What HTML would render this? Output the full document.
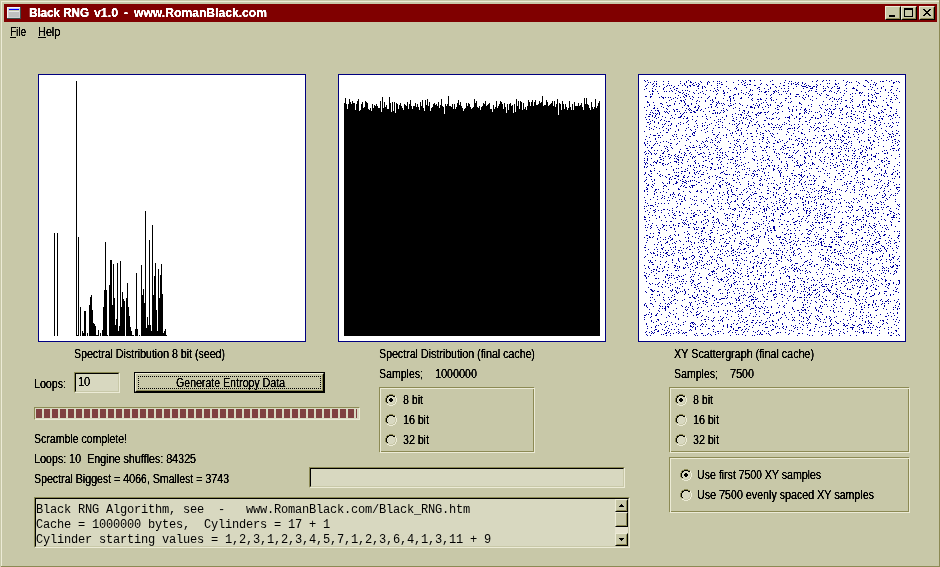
<!DOCTYPE html>
<html><head><meta charset="utf-8"><title>Black RNG</title>
<style>
html,body{margin:0;padding:0}
body{width:940px;height:567px;overflow:hidden;background:#c8c8a8;position:relative;font-family:"Liberation Sans",sans-serif;font-size:12px;color:#000}
.abs{position:absolute}
.t{position:absolute;white-space:nowrap;line-height:14px;height:14px;transform-origin:0 0;display:inline-block;will-change:transform;filter:url(#al)}
u{text-decoration:none;border-bottom:1px solid #000;display:inline-block;line-height:11px;height:12px}
.panel{position:absolute;width:268px;height:268px;box-sizing:border-box;border:1px solid #000080;background:#fff}
.sunk{position:absolute;box-sizing:border-box;border:1px solid;border-color:#8c8a54 #ecebd6 #ecebd6 #8c8a54;background:#d8d8c0}
.sunk>i{position:absolute;left:0;top:0;right:0;bottom:0;border:1px solid;border-color:#000 #c8c8a8 #c8c8a8 #000}
.mono{will-change:transform;position:absolute;font-family:"Liberation Mono",monospace;font-size:12px;letter-spacing:-0.2px;line-height:15px;white-space:pre}
</style></head><body>
<svg width="0" height="0" style="position:absolute"><filter id="al" x="0" y="0" width="100%" height="100%" color-interpolation-filters="sRGB"><feComponentTransfer><feFuncA type="table" tableValues="0 0.05 0.75 1 1 1"/></feComponentTransfer></filter></svg>
<!-- frame -->
<div class="abs" style="left:1px;top:1px;width:938px;height:1px;background:#ecebd6"></div>
<div class="abs" style="left:1px;top:1px;width:1px;height:565px;background:#ecebd6"></div>
<div class="abs" style="left:939px;top:0;width:1px;height:567px;background:#8c8a54"></div>
<div class="abs" style="left:1px;top:566px;width:939px;height:1px;background:#8c8a54"></div>
<!-- title bar -->
<div class="abs" style="left:4px;top:4px;width:933px;height:18px;background:#800000"></div>
<svg class="abs" style="left:7px;top:7px" width="14" height="12" viewBox="0 0 14 12" shape-rendering="crispEdges">
<rect x="0" y="0" width="14" height="12" fill="#3c5050"/>
<rect x="0" y="0" width="13" height="11" fill="#f4f4f8"/>
<rect x="1" y="1" width="12" height="10" fill="#d0d0d0"/>
<rect x="2" y="1" width="10" height="1" fill="#c4c4f6"/>
<rect x="2" y="2" width="10" height="1" fill="#0000ff"/>
<rect x="2" y="3" width="10" height="1" fill="#c4c4a4"/>
<rect x="2" y="4" width="10" height="1" fill="#e8e8e8"/>
<rect x="2" y="5" width="10" height="5" fill="#c0c0c0"/>
</svg>

<div class="abs" style="left:885px;top:6px;width:16px;height:14px;background:#c8c8a8;box-sizing:border-box;border:1px solid;border-color:#ecebd6 #000 #000 #ecebd6"><div style="width:14px;height:12px;box-sizing:border-box;border:1px solid;border-color:#c8c8a8 #8c8a54 #8c8a54 #c8c8a8;position:relative"><div class="abs" style="left:2px;top:7px;width:6px;height:2px;background:#000"></div></div></div>
<div class="abs" style="left:901px;top:6px;width:16px;height:14px;background:#c8c8a8;box-sizing:border-box;border:1px solid;border-color:#ecebd6 #000 #000 #ecebd6"><div style="width:14px;height:12px;box-sizing:border-box;border:1px solid;border-color:#c8c8a8 #8c8a54 #8c8a54 #c8c8a8;position:relative"><div class="abs" style="left:1px;top:0px;width:9px;height:9px;box-sizing:border-box;border:1px solid #000;border-top-width:2px"></div></div></div>
<div class="abs" style="left:919px;top:6px;width:16px;height:14px;background:#c8c8a8;box-sizing:border-box;border:1px solid;border-color:#ecebd6 #000 #000 #ecebd6"><div style="width:14px;height:12px;box-sizing:border-box;border:1px solid;border-color:#c8c8a8 #8c8a54 #8c8a54 #c8c8a8;position:relative"><svg class="abs" style="left:2px;top:1px" width="8" height="7" viewBox="0 0 8 7" shape-rendering="crispEdges"><path d="M0 0h2v1h1v1h2v-1h1v-1h2v1h-1v1h-1v1h-1v1h1v1h1v1h1v1h-2v-1h-1v-1h-2v1h-1v1h-2v-1h1v-1h1v-1h1v-1h-1v-1h-1v-1h-1z" fill="#000"/></svg></div></div>
<div class="abs" style="left:10px;top:37px;width:6px;height:1px;background:#000"></div><div class="abs" style="left:38px;top:37px;width:8px;height:1px;background:#000"></div>
<!-- panels -->
<div class="panel" style="left:38px;top:74px"><svg class="abs" style="left:-1px;top:-1px" width="268" height="268" viewBox="0 0 268 268" shape-rendering="crispEdges"><path d="M16 159v103h1v-103zM19 159v103h1v-103zM38 7v255h1v-255zM39 261v1h1v-1zM40 163v99h1v-99zM42 233v29h1v-29zM44 257v5h1v-5zM45 259v3h1v-3zM46 237v25h1v-25zM47 237v25h1v-25zM49 259v3h1v-3zM51 231v31h1v-31zM52 223v39h1v-39zM53 221v41h1v-41zM54 236v26h1v-26zM55 249v13h1v-13zM56 250v12h1v-12zM57 252v10h1v-10zM58 261v1h1v-1zM59 261v1h1v-1zM60 256v6h1v-6zM62 259v3h1v-3zM64 256v6h1v-6zM65 233v29h1v-29zM66 216v46h1v-46zM67 168v94h1v-94zM68 216v46h1v-46zM69 261v1h1v-1zM71 211v51h1v-51zM72 186v76h1v-76zM73 186v76h1v-76zM74 231v31h1v-31zM75 190v72h1v-72zM76 224v38h1v-38zM77 251v11h1v-11zM78 245v17h1v-17zM79 189v73h1v-73zM80 257v5h1v-5zM81 252v10h1v-10zM82 187v75h1v-75zM83 233v29h1v-29zM84 218v44h1v-44zM85 225v37h1v-37zM86 227v35h1v-35zM88 224v38h1v-38zM89 209v53h1v-53zM90 233v29h1v-29zM91 242v20h1v-20zM92 253v9h1v-9zM93 257v5h1v-5zM94 261v1h1v-1zM95 261v1h1v-1zM97 255v7h1v-7zM98 199v63h1v-63zM99 255v7h1v-7zM101 261v1h1v-1zM103 191v71h1v-71zM104 221v41h1v-41zM105 215v47h1v-47zM106 229v33h1v-33zM107 137v125h1v-125zM108 254v8h1v-8zM109 243v19h1v-19zM110 251v11h1v-11zM111 166v96h1v-96zM112 251v11h1v-11zM113 257v5h1v-5zM114 151v111h1v-111zM115 221v41h1v-41zM116 202v60h1v-60zM117 189v73h1v-73zM118 236v26h1v-26zM119 257v5h1v-5zM120 195v67h1v-67zM121 224v38h1v-38zM122 201v61h1v-61zM123 190v72h1v-72zM124 220v42h1v-42zM125 259v3h1v-3zM126 257v5h1v-5zM127 255v7h1v-7zM128 261v1h1v-1z" fill="#000"/></svg></div>
<div class="panel" style="left:338px;top:74px"><svg class="abs" style="left:-1px;top:-1px" width="268" height="268" viewBox="0 0 268 268" shape-rendering="crispEdges"><path d="M6 262V29h1V24h1V30h1V35h1V30h1V25h1V28h1V30h1V27h1V29h1V29h1V36h1V30h1V27h1V25h1V37h1V36h1V30h1V28h1V34h1V33h1V27h1V28h1V29h1V35h1V36h1V34h1V37h1V30h1V34h1V31h1V32h1V30h1V32h1V34h1V34h1V27h1V38h1V23h1V34h1V28h1V33h1V31h1V35h1V35h1V23h1V29h1V38h1V28h1V37h1V28h1V39h1V29h1V30h1V35h1V31h1V29h1V32h1V34h1V36h1V30h1V31h1V32h1V28h1V35h1V30h1V26h1V32h1V35h1V32h1V32h1V29h1V33h1V30h1V33h1V36h1V28h1V32h1V26h1V34h1V37h1V26h1V31h1V25h1V32h1V28h1V37h1V34h1V33h1V30h1V29h1V31h1V30h1V32h1V28h1V34h1V31h1V25h1V32h1V33h1V40h1V30h1V32h1V30h1V22h1V32h1V32h1V33h1V30h1V35h1V30h1V35h1V33h1V29h1V26h1V31h1V28h1V32h1V34h1V37h1V35h1V34h1V29h1V32h1V29h1V30h1V33h1V35h1V34h1V33h1V25h1V29h1V27h1V33h1V34h1V32h1V36h1V33h1V32h1V29h1V30h1V27h1V32h1V31h1V30h1V29h1V35h1V35h1V38h1V31h1V35h1V33h1V27h1V34h1V32h1V30h1V27h1V28h1V30h1V35h1V29h1V33h1V39h1V30h1V36h1V30h1V29h1V32h1V31h1V39h1V30h1V38h1V25h1V32h1V27h1V35h1V27h1V28h1V36h1V29h1V35h1V33h1V36h1V32h1V26h1V28h1V32h1V28h1V26h1V32h1V28h1V26h1V31h1V31h1V30h1V27h1V29h1V28h1V22h1V32h1V31h1V31h1V26h1V28h1V32h1V31h1V30h1V29h1V27h1V32h1V27h1V33h1V30h1V25h1V41h1V29h1V30h1V36h1V27h1V30h1V35h1V30h1V33h1V36h1V34h1V27h1V33h1V36h1V30h1V36h1V28h1V32h1V32h1V32h1V29h1V32h1V31h1V29h1V33h1V36h1V24h1V30h1V24h1V30h1V31h1V34h1V36h1V28h1V33h1V35h1V33h1V25h1V34h1V32h1V29h1V27h1V262z" fill="#000"/></svg></div>
<div class="panel" style="left:638px;top:74px"><svg class="abs" style="left:-1px;top:-1px" width="268" height="268" viewBox="0 0 268 268" shape-rendering="crispEdges"><path d="M6 6.5h1M9 6.5h1M50 6.5h1M100 6.5h1M104 6.5h1M107 6.5h1M111 6.5h2M116 6.5h1M122 6.5h1M134 6.5h1M147 6.5h1M179 6.5h1M185 6.5h1M188 6.5h1M191 6.5h1M197 6.5h1M205 6.5h1M227 6.5h2M233 6.5h1M248 6.5h1M253 6.5h1M7 7.5h1M16 7.5h1M18 7.5h1M25 7.5h1M30 7.5h1M42 7.5h1M48 7.5h1M52 7.5h1M62 7.5h1M70 7.5h1M75 7.5h1M79 7.5h1M81 7.5h1M88 7.5h1M105 7.5h1M112 7.5h1M132 7.5h1M151 7.5h1M153 7.5h1M174 7.5h1M178 7.5h1M184 7.5h1M209 7.5h1M218 7.5h1M229 7.5h1M242 7.5h1M244 7.5h2M251 7.5h1M258 7.5h1M260 7.5h1M10 8.5h1M12 8.5h1M48 8.5h1M52 8.5h2M57 8.5h1M63 8.5h1M69 8.5h1M71 8.5h1M83 8.5h1M95 8.5h1M103 8.5h1M107 8.5h1M146 8.5h1M157 8.5h1M160 8.5h1M164 8.5h1M208 8.5h1M211 8.5h1M213 8.5h1M220 8.5h1M230 8.5h1M236 8.5h1M255 8.5h2M261 8.5h1M15 9.5h1M18 9.5h1M30 9.5h1M42 9.5h1M46 9.5h1M55 9.5h1M60 9.5h1M69 9.5h1M79 9.5h1M81 9.5h1M106 9.5h1M123 9.5h1M142 9.5h1M150 9.5h1M153 9.5h1M155 9.5h1M159 9.5h1M164 9.5h1M167 9.5h1M189 9.5h1M191 9.5h1M197 9.5h1M200 9.5h1M221 9.5h1M238 9.5h1M255 9.5h1M9 10.5h1M14 10.5h1M18 10.5h1M25 10.5h1M46 10.5h1M54 10.5h1M58 10.5h1M61 10.5h1M69 10.5h1M83 10.5h2M100 10.5h1M104 10.5h1M109 10.5h1M111 10.5h2M122 10.5h1M128 10.5h1M134 10.5h2M153 10.5h1M157 10.5h2M160 10.5h1M166 10.5h1M178 10.5h1M182 10.5h1M197 10.5h2M208 10.5h1M232 10.5h1M235 10.5h1M237 10.5h1M8 11.5h1M16 11.5h1M29 11.5h1M31 11.5h1M33 11.5h1M40 11.5h1M44 11.5h1M47 11.5h1M51 11.5h2M55 11.5h2M60 11.5h1M73 11.5h1M79 11.5h1M106 11.5h2M116 11.5h2M129 11.5h1M145 11.5h2M163 11.5h1M168 11.5h1M170 11.5h1M179 11.5h1M207 11.5h1M219 11.5h1M225 11.5h1M237 11.5h1M7 12.5h1M15 12.5h1M18 12.5h1M21 12.5h1M28 12.5h1M36 12.5h1M49 12.5h1M52 12.5h1M59 12.5h2M64 12.5h1M66 12.5h1M88 12.5h1M137 12.5h1M141 12.5h1M150 12.5h1M158 12.5h1M164 12.5h4M171 12.5h2M175 12.5h2M178 12.5h1M185 12.5h1M189 12.5h1M196 12.5h1M199 12.5h1M226 12.5h2M232 12.5h1M245 12.5h1M253 12.5h2M26 13.5h1M35 13.5h1M49 13.5h1M64 13.5h1M67 13.5h1M79 13.5h1M82 13.5h1M97 13.5h1M108 13.5h1M120 13.5h2M132 13.5h1M138 13.5h1M168 13.5h2M174 13.5h1M178 13.5h1M190 13.5h1M194 13.5h1M201 13.5h1M215 13.5h1M234 13.5h1M243 13.5h1M8 14.5h1M14 14.5h1M25 14.5h1M32 14.5h1M38 14.5h2M60 14.5h1M64 14.5h1M76 14.5h1M90 14.5h1M96 14.5h1M98 14.5h1M119 14.5h1M126 14.5h1M132 14.5h1M143 14.5h1M146 14.5h1M150 14.5h1M155 14.5h1M165 14.5h1M172 14.5h3M185 14.5h1M187 14.5h1M193 14.5h1M199 14.5h3M208 14.5h1M214 14.5h3M239 14.5h1M243 14.5h1M259 14.5h1M6 15.5h1M17 15.5h1M25 15.5h1M36 15.5h1M79 15.5h1M98 15.5h1M112 15.5h1M121 15.5h1M130 15.5h1M178 15.5h1M218 15.5h1M230 15.5h1M233 15.5h1M247 15.5h1M253 15.5h1M14 16.5h1M33 16.5h1M38 16.5h1M44 16.5h1M47 16.5h1M49 16.5h1M58 16.5h1M68 16.5h1M72 16.5h1M77 16.5h1M80 16.5h1M85 16.5h1M92 16.5h1M103 16.5h1M112 16.5h1M114 16.5h1M137 16.5h1M140 16.5h1M150 16.5h1M171 16.5h1M173 16.5h1M186 16.5h2M192 16.5h1M200 16.5h1M206 16.5h1M218 16.5h2M236 16.5h1M247 16.5h1M252 16.5h1M258 16.5h1M11 17.5h1M14 17.5h2M19 17.5h1M26 17.5h1M28 17.5h1M31 17.5h1M34 17.5h1M40 17.5h1M51 17.5h1M64 17.5h1M75 17.5h1M78 17.5h1M85 17.5h1M111 17.5h1M121 17.5h1M123 17.5h1M127 17.5h2M130 17.5h1M135 17.5h2M138 17.5h1M145 17.5h1M147 17.5h1M149 17.5h1M163 17.5h1M170 17.5h1M177 17.5h2M185 17.5h1M191 17.5h1M193 17.5h1M199 17.5h1M208 17.5h1M242 17.5h1M261 17.5h1M41 18.5h2M45 18.5h1M55 18.5h1M62 18.5h1M86 18.5h1M89 18.5h1M103 18.5h1M108 18.5h1M126 18.5h2M136 18.5h1M140 18.5h1M167 18.5h1M196 18.5h1M202 18.5h1M221 18.5h2M224 18.5h1M237 18.5h1M250 18.5h1M253 18.5h1M14 19.5h1M20 19.5h1M37 19.5h1M44 19.5h1M48 19.5h1M56 19.5h1M60 19.5h1M65 19.5h1M79 19.5h1M85 19.5h2M100 19.5h1M105 19.5h1M110 19.5h1M135 19.5h1M148 19.5h1M152 19.5h1M179 19.5h1M183 19.5h1M198 19.5h1M206 19.5h1M214 19.5h1M217 19.5h1M221 19.5h1M223 19.5h1M230 19.5h1M238 19.5h3M255 19.5h1M12 20.5h1M14 20.5h1M46 20.5h1M50 20.5h1M67 20.5h1M78 20.5h1M96 20.5h2M100 20.5h1M107 20.5h1M112 20.5h1M114 20.5h1M120 20.5h1M128 20.5h1M133 20.5h1M141 20.5h1M143 20.5h1M152 20.5h1M158 20.5h3M168 20.5h1M181 20.5h1M188 20.5h1M212 20.5h1M233 20.5h1M236 20.5h1M40 21.5h1M47 21.5h2M86 21.5h1M95 21.5h1M111 21.5h1M113 21.5h1M132 21.5h1M165 21.5h1M170 21.5h1M182 21.5h1M189 21.5h2M205 21.5h1M222 21.5h1M226 21.5h1M230 21.5h1M234 21.5h1M250 21.5h1M256 21.5h1M258 21.5h1M7 22.5h2M12 22.5h2M23 22.5h1M45 22.5h1M48 22.5h1M51 22.5h1M54 22.5h1M71 22.5h1M91 22.5h2M150 22.5h1M157 22.5h2M161 22.5h1M170 22.5h1M174 22.5h1M214 22.5h1M230 22.5h1M237 22.5h1M242 22.5h1M12 23.5h1M21 23.5h1M24 23.5h2M27 23.5h1M30 23.5h1M32 23.5h1M37 23.5h1M42 23.5h1M46 23.5h1M55 23.5h1M60 23.5h1M63 23.5h1M70 23.5h1M77 23.5h1M91 23.5h1M95 23.5h1M103 23.5h1M110 23.5h1M133 23.5h1M164 23.5h1M167 23.5h1M188 23.5h1M194 23.5h1M203 23.5h1M234 23.5h1M238 23.5h1M253 23.5h1M258 23.5h1M25 24.5h1M35 24.5h1M39 24.5h1M52 24.5h1M69 24.5h1M77 24.5h1M85 24.5h1M92 24.5h1M95 24.5h1M102 24.5h2M114 24.5h1M122 24.5h1M128 24.5h1M132 24.5h1M147 24.5h2M152 24.5h1M165 24.5h1M178 24.5h1M192 24.5h1M196 24.5h1M201 24.5h1M212 24.5h1M238 24.5h1M248 24.5h1M259 24.5h1M33 25.5h1M47 25.5h1M54 25.5h1M74 25.5h1M92 25.5h1M113 25.5h1M119 25.5h2M122 25.5h2M133 25.5h1M138 25.5h1M166 25.5h1M172 25.5h1M191 25.5h1M196 25.5h1M198 25.5h1M200 25.5h1M203 25.5h1M214 25.5h1M230 25.5h1M252 25.5h2M257 25.5h1M31 26.5h1M42 26.5h2M45 26.5h1M59 26.5h1M67 26.5h1M72 26.5h1M74 26.5h1M89 26.5h1M92 26.5h1M96 26.5h1M114 26.5h1M127 26.5h1M133 26.5h1M135 26.5h1M147 26.5h1M174 26.5h1M207 26.5h2M213 26.5h1M225 26.5h2M230 26.5h2M233 26.5h2M245 26.5h1M9 27.5h1M37 27.5h1M43 27.5h1M46 27.5h1M58 27.5h1M61 27.5h1M67 27.5h1M75 27.5h1M80 27.5h1M92 27.5h1M120 27.5h1M153 27.5h1M185 27.5h1M194 27.5h1M199 27.5h1M203 27.5h1M214 27.5h1M224 27.5h1M233 27.5h1M235 27.5h1M237 27.5h1M252 27.5h1M9 28.5h2M15 28.5h1M28 28.5h1M46 28.5h1M74 28.5h1M78 28.5h1M80 28.5h1M125 28.5h1M128 28.5h1M137 28.5h1M143 28.5h1M150 28.5h1M152 28.5h1M161 28.5h1M212 28.5h1M224 28.5h1M233 28.5h1M248 28.5h1M254 28.5h1M261 28.5h1M22 29.5h2M36 29.5h1M41 29.5h1M47 29.5h1M53 29.5h1M58 29.5h1M79 29.5h1M81 29.5h1M83 29.5h1M85 29.5h1M92 29.5h1M97 29.5h1M101 29.5h1M118 29.5h1M123 29.5h1M142 29.5h1M161 29.5h2M202 29.5h1M230 29.5h1M11 30.5h1M24 30.5h1M36 30.5h1M47 30.5h1M53 30.5h1M72 30.5h2M78 30.5h1M86 30.5h1M95 30.5h1M102 30.5h1M115 30.5h1M121 30.5h1M129 30.5h1M132 30.5h1M163 30.5h1M173 30.5h1M184 30.5h1M189 30.5h1M197 30.5h1M199 30.5h1M221 30.5h1M224 30.5h1M230 30.5h1M249 30.5h1M11 31.5h1M16 31.5h1M29 31.5h1M31 31.5h2M46 31.5h1M49 31.5h2M60 31.5h1M78 31.5h1M84 31.5h1M90 31.5h1M92 31.5h2M104 31.5h1M109 31.5h1M117 31.5h1M119 31.5h1M121 31.5h1M130 31.5h1M132 31.5h1M139 31.5h2M144 31.5h1M170 31.5h1M181 31.5h1M187 31.5h1M193 31.5h1M208 31.5h1M214 31.5h1M221 31.5h1M231 31.5h1M235 31.5h1M240 31.5h1M249 31.5h2M9 32.5h1M23 32.5h1M30 32.5h1M50 32.5h1M57 32.5h1M61 32.5h1M73 32.5h1M77 32.5h1M91 32.5h1M112 32.5h2M120 32.5h1M127 32.5h1M141 32.5h1M143 32.5h1M155 32.5h1M158 32.5h1M173 32.5h1M197 32.5h1M207 32.5h2M219 32.5h2M225 32.5h1M227 32.5h1M236 32.5h1M238 32.5h1M244 32.5h1M6 33.5h1M16 33.5h1M25 33.5h1M44 33.5h1M56 33.5h2M60 33.5h1M70 33.5h1M73 33.5h1M79 33.5h1M97 33.5h1M108 33.5h1M112 33.5h3M116 33.5h1M120 33.5h1M124 33.5h1M130 33.5h1M139 33.5h1M150 33.5h1M163 33.5h1M182 33.5h1M209 33.5h1M211 33.5h1M214 33.5h1M222 33.5h1M225 33.5h1M227 33.5h1M239 33.5h1M252 33.5h2M15 34.5h2M19 34.5h1M28 34.5h1M48 34.5h1M51 34.5h1M60 34.5h1M67 34.5h1M85 34.5h1M95 34.5h1M101 34.5h1M116 34.5h1M137 34.5h1M150 34.5h1M167 34.5h1M183 34.5h1M191 34.5h1M197 34.5h1M201 34.5h1M204 34.5h1M215 34.5h1M232 34.5h1M253 34.5h1M29 35.5h1M35 35.5h1M38 35.5h2M50 35.5h1M52 35.5h1M59 35.5h1M63 35.5h1M88 35.5h1M125 35.5h1M139 35.5h2M151 35.5h1M154 35.5h1M158 35.5h1M162 35.5h1M166 35.5h2M171 35.5h1M187 35.5h1M189 35.5h1M192 35.5h1M195 35.5h2M204 35.5h1M228 35.5h1M246 35.5h2M258 35.5h1M8 36.5h1M13 36.5h1M17 36.5h1M19 36.5h2M36 36.5h1M47 36.5h1M51 36.5h1M53 36.5h1M58 36.5h2M62 36.5h1M75 36.5h2M83 36.5h1M85 36.5h1M89 36.5h1M101 36.5h1M105 36.5h2M154 36.5h1M158 36.5h1M166 36.5h1M168 36.5h1M188 36.5h1M202 36.5h2M213 36.5h1M243 36.5h1M20 37.5h1M26 37.5h1M28 37.5h1M31 37.5h1M36 37.5h1M39 37.5h1M41 37.5h1M55 37.5h2M65 37.5h1M71 37.5h1M86 37.5h1M106 37.5h1M110 37.5h1M130 37.5h1M144 37.5h1M151 37.5h1M154 37.5h1M167 37.5h1M171 37.5h1M173 37.5h1M181 37.5h1M191 37.5h1M193 37.5h1M213 37.5h1M217 37.5h1M221 37.5h1M226 37.5h2M232 37.5h1M244 37.5h1M252 37.5h1M258 37.5h1M12 38.5h1M14 38.5h1M21 38.5h1M27 38.5h1M29 38.5h1M46 38.5h1M48 38.5h1M52 38.5h2M56 38.5h2M77 38.5h1M79 38.5h1M82 38.5h1M85 38.5h1M104 38.5h1M110 38.5h1M114 38.5h1M120 38.5h1M122 38.5h2M126 38.5h2M129 38.5h1M137 38.5h1M140 38.5h1M166 38.5h1M168 38.5h1M177 38.5h1M179 38.5h1M186 38.5h1M193 38.5h1M202 38.5h1M209 38.5h1M223 38.5h1M240 38.5h1M243 38.5h1M245 38.5h1M15 39.5h1M17 39.5h1M19 39.5h1M21 39.5h1M30 39.5h1M42 39.5h1M45 39.5h1M74 39.5h2M77 39.5h1M79 39.5h1M81 39.5h1M97 39.5h1M106 39.5h1M109 39.5h1M119 39.5h1M121 39.5h2M135 39.5h1M139 39.5h1M161 39.5h2M166 39.5h1M170 39.5h1M190 39.5h1M193 39.5h1M195 39.5h1M208 39.5h1M213 39.5h1M225 39.5h1M240 39.5h2M257 39.5h2M8 40.5h1M11 40.5h2M18 40.5h1M21 40.5h1M37 40.5h1M44 40.5h1M67 40.5h1M94 40.5h1M100 40.5h1M102 40.5h2M117 40.5h2M127 40.5h1M134 40.5h1M153 40.5h1M161 40.5h1M182 40.5h1M194 40.5h1M204 40.5h1M208 40.5h1M215 40.5h2M231 40.5h1M248 40.5h1M255 40.5h1M14 41.5h1M17 41.5h1M33 41.5h1M43 41.5h1M88 41.5h1M103 41.5h1M108 41.5h1M110 41.5h1M118 41.5h1M120 41.5h1M154 41.5h1M175 41.5h1M183 41.5h1M187 41.5h1M190 41.5h1M201 41.5h1M219 41.5h1M235 41.5h1M251 41.5h2M255 41.5h1M259 41.5h1M10 42.5h2M14 42.5h1M17 42.5h1M24 42.5h1M42 42.5h2M46 42.5h1M54 42.5h1M59 42.5h1M64 42.5h1M68 42.5h1M78 42.5h1M88 42.5h1M94 42.5h1M111 42.5h2M151 42.5h1M158 42.5h1M164 42.5h1M183 42.5h1M192 42.5h2M210 42.5h1M212 42.5h2M225 42.5h1M231 42.5h1M236 42.5h1M242 42.5h1M245 42.5h1M250 42.5h1M253 42.5h1M7 43.5h1M16 43.5h1M20 43.5h1M27 43.5h1M34 43.5h1M40 43.5h3M49 43.5h1M72 43.5h1M84 43.5h1M98 43.5h1M102 43.5h1M105 43.5h1M108 43.5h1M118 43.5h1M128 43.5h1M138 43.5h1M147 43.5h1M149 43.5h3M158 43.5h1M167 43.5h1M173 43.5h2M177 43.5h1M182 43.5h1M197 43.5h1M208 43.5h1M217 43.5h1M231 43.5h2M238 43.5h1M257 43.5h1M261 43.5h1M18 44.5h1M32 44.5h1M36 44.5h1M45 44.5h1M48 44.5h2M68 44.5h1M95 44.5h1M105 44.5h1M107 44.5h1M113 44.5h1M129 44.5h1M131 44.5h1M134 44.5h2M141 44.5h1M151 44.5h1M156 44.5h1M161 44.5h2M177 44.5h1M179 44.5h2M190 44.5h1M201 44.5h1M203 44.5h2M213 44.5h1M219 44.5h1M221 44.5h1M236 44.5h1M241 44.5h1M243 44.5h2M254 44.5h1M8 45.5h1M11 45.5h1M23 45.5h1M54 45.5h1M69 45.5h1M80 45.5h1M82 45.5h1M86 45.5h1M98 45.5h1M109 45.5h1M115 45.5h1M133 45.5h1M140 45.5h1M161 45.5h1M172 45.5h1M214 45.5h1M225 45.5h2M244 45.5h1M252 45.5h1M14 46.5h1M22 46.5h1M26 46.5h1M50 46.5h1M58 46.5h1M76 46.5h1M94 46.5h2M103 46.5h1M112 46.5h1M126 46.5h2M150 46.5h1M171 46.5h1M188 46.5h1M217 46.5h1M227 46.5h1M233 46.5h2M240 46.5h2M12 47.5h1M16 47.5h1M28 47.5h1M30 47.5h2M49 47.5h1M57 47.5h1M80 47.5h1M82 47.5h1M96 47.5h1M101 47.5h1M113 47.5h1M119 47.5h1M151 47.5h1M161 47.5h1M167 47.5h2M200 47.5h1M224 47.5h2M236 47.5h2M9 48.5h2M16 48.5h1M20 48.5h1M42 48.5h1M48 48.5h1M67 48.5h1M78 48.5h1M84 48.5h1M104 48.5h1M111 48.5h1M118 48.5h1M146 48.5h1M171 48.5h1M181 48.5h1M185 48.5h1M190 48.5h1M202 48.5h1M209 48.5h1M212 48.5h1M222 48.5h1M237 48.5h1M242 48.5h1M254 48.5h1M258 48.5h1M260 48.5h1M12 49.5h1M20 49.5h1M27 49.5h1M33 49.5h1M40 49.5h1M45 49.5h1M58 49.5h1M64 49.5h1M73 49.5h1M91 49.5h1M98 49.5h1M101 49.5h1M104 49.5h1M111 49.5h1M130 49.5h1M133 49.5h1M148 49.5h1M177 49.5h1M180 49.5h1M182 49.5h1M220 49.5h1M226 49.5h1M236 49.5h1M246 49.5h1M250 49.5h1M255 49.5h1M11 50.5h1M24 50.5h1M26 50.5h1M33 50.5h1M42 50.5h1M50 50.5h1M71 50.5h1M80 50.5h1M94 50.5h1M96 50.5h1M100 50.5h1M107 50.5h1M116 50.5h2M120 50.5h1M125 50.5h1M130 50.5h2M134 50.5h1M139 50.5h1M144 50.5h1M146 50.5h1M151 50.5h1M156 50.5h1M160 50.5h1M164 50.5h1M169 50.5h1M196 50.5h1M203 50.5h1M206 50.5h1M238 50.5h1M242 50.5h1M30 51.5h1M32 51.5h1M38 51.5h1M59 51.5h1M64 51.5h1M66 51.5h1M69 51.5h1M77 51.5h1M84 51.5h1M99 51.5h1M110 51.5h1M114 51.5h1M121 51.5h1M137 51.5h1M141 51.5h1M153 51.5h1M176 51.5h1M188 51.5h1M208 51.5h1M232 51.5h1M241 51.5h1M252 51.5h1M259 51.5h1M8 52.5h1M16 52.5h1M25 52.5h1M38 52.5h1M56 52.5h1M64 52.5h1M98 52.5h1M110 52.5h1M121 52.5h1M126 52.5h1M143 52.5h1M161 52.5h1M172 52.5h1M185 52.5h1M187 52.5h1M197 52.5h1M207 52.5h1M248 52.5h1M251 52.5h1M254 52.5h1M11 53.5h1M18 53.5h1M24 53.5h1M50 53.5h1M59 53.5h1M69 53.5h1M80 53.5h2M84 53.5h1M87 53.5h1M99 53.5h1M109 53.5h1M123 53.5h1M133 53.5h1M135 53.5h2M138 53.5h1M140 53.5h1M142 53.5h1M156 53.5h1M160 53.5h1M173 53.5h1M175 53.5h1M179 53.5h2M199 53.5h1M210 53.5h2M216 53.5h1M223 53.5h1M237 53.5h1M253 53.5h1M13 54.5h1M21 54.5h1M28 54.5h1M32 54.5h1M48 54.5h1M68 54.5h1M75 54.5h1M98 54.5h1M103 54.5h1M119 54.5h1M150 54.5h3M154 54.5h1M156 54.5h1M159 54.5h1M178 54.5h1M181 54.5h1M192 54.5h1M194 54.5h1M219 54.5h1M232 54.5h1M236 54.5h1M243 54.5h1M11 55.5h1M15 55.5h1M30 55.5h1M40 55.5h1M52 55.5h1M57 55.5h1M66 55.5h1M89 55.5h1M100 55.5h1M135 55.5h1M141 55.5h1M143 55.5h1M149 55.5h1M164 55.5h1M171 55.5h1M177 55.5h1M185 55.5h1M188 55.5h1M190 55.5h1M205 55.5h1M217 55.5h3M225 55.5h1M230 55.5h1M237 55.5h1M25 56.5h1M30 56.5h1M40 56.5h1M47 56.5h1M53 56.5h1M63 56.5h1M74 56.5h1M91 56.5h1M99 56.5h2M102 56.5h1M108 56.5h1M118 56.5h1M127 56.5h1M130 56.5h1M156 56.5h1M176 56.5h1M184 56.5h1M204 56.5h1M210 56.5h1M221 56.5h1M226 56.5h1M234 56.5h1M247 56.5h1M258 56.5h1M6 57.5h1M37 57.5h1M57 57.5h1M69 57.5h1M97 57.5h1M118 57.5h1M128 57.5h1M131 57.5h1M149 57.5h1M160 57.5h1M171 57.5h1M180 57.5h1M185 57.5h2M198 57.5h1M206 57.5h1M208 57.5h1M216 57.5h1M218 57.5h1M221 57.5h1M223 57.5h1M238 57.5h1M248 57.5h1M254 57.5h1M260 57.5h1M22 58.5h1M28 58.5h2M55 58.5h2M67 58.5h1M74 58.5h1M81 58.5h1M94 58.5h1M103 58.5h1M122 58.5h1M150 58.5h1M163 58.5h1M210 58.5h1M219 58.5h1M225 58.5h1M19 59.5h1M54 59.5h1M56 59.5h1M92 59.5h1M94 59.5h1M98 59.5h1M103 59.5h1M109 59.5h1M112 59.5h2M119 59.5h1M124 59.5h2M132 59.5h1M134 59.5h1M139 59.5h1M155 59.5h1M163 59.5h2M206 59.5h2M211 59.5h1M224 59.5h1M237 59.5h1M244 59.5h1M250 59.5h1M254 59.5h1M258 59.5h2M12 60.5h1M36 60.5h1M38 60.5h1M48 60.5h1M54 60.5h1M75 60.5h2M80 60.5h1M88 60.5h1M103 60.5h1M122 60.5h1M135 60.5h1M148 60.5h1M166 60.5h1M191 60.5h1M195 60.5h1M200 60.5h1M215 60.5h1M220 60.5h1M230 60.5h1M251 60.5h2M255 60.5h1M15 61.5h3M20 61.5h2M24 61.5h1M34 61.5h1M44 61.5h1M55 61.5h2M79 61.5h1M85 61.5h1M88 61.5h1M93 61.5h1M101 61.5h1M125 61.5h1M133 61.5h1M153 61.5h1M177 61.5h1M183 61.5h1M186 61.5h2M192 61.5h1M195 61.5h1M200 61.5h1M204 61.5h1M236 61.5h1M245 61.5h1M257 61.5h1M261 61.5h1M8 62.5h1M35 62.5h1M38 62.5h1M47 62.5h1M51 62.5h2M78 62.5h1M105 62.5h1M113 62.5h2M118 62.5h1M134 62.5h1M157 62.5h1M186 62.5h1M193 62.5h1M200 62.5h1M204 62.5h2M210 62.5h1M216 62.5h1M237 62.5h1M241 62.5h1M251 62.5h1M253 62.5h1M255 62.5h1M11 63.5h1M20 63.5h1M22 63.5h1M70 63.5h1M79 63.5h1M88 63.5h1M95 63.5h1M124 63.5h2M129 63.5h1M136 63.5h1M167 63.5h1M179 63.5h1M192 63.5h1M202 63.5h1M206 63.5h1M210 63.5h1M212 63.5h1M220 63.5h1M230 63.5h1M232 63.5h1M239 63.5h1M249 63.5h1M253 63.5h1M17 64.5h1M39 64.5h1M43 64.5h1M49 64.5h1M68 64.5h1M77 64.5h1M82 64.5h1M109 64.5h1M125 64.5h1M151 64.5h1M160 64.5h2M175 64.5h2M188 64.5h1M194 64.5h1M243 64.5h1M7 65.5h1M17 65.5h1M32 65.5h1M36 65.5h1M50 65.5h1M73 65.5h1M99 65.5h1M101 65.5h1M114 65.5h1M121 65.5h1M124 65.5h1M129 65.5h1M141 65.5h1M151 65.5h1M153 65.5h1M158 65.5h1M164 65.5h1M166 65.5h1M169 65.5h1M184 65.5h1M196 65.5h1M198 65.5h1M200 65.5h1M202 65.5h1M208 65.5h1M219 65.5h1M230 65.5h1M240 65.5h1M250 65.5h1M256 65.5h2M48 66.5h1M58 66.5h1M68 66.5h1M74 66.5h1M77 66.5h1M82 66.5h1M96 66.5h1M98 66.5h1M107 66.5h1M137 66.5h1M144 66.5h1M157 66.5h1M159 66.5h1M169 66.5h1M172 66.5h1M182 66.5h1M185 66.5h1M191 66.5h2M203 66.5h1M205 66.5h1M223 66.5h1M230 66.5h2M235 66.5h1M245 66.5h1M248 66.5h1M254 66.5h1M260 66.5h1M9 67.5h1M12 67.5h1M18 67.5h1M25 67.5h1M28 67.5h1M41 67.5h1M59 67.5h1M64 67.5h1M67 67.5h1M69 67.5h1M80 67.5h1M90 67.5h1M99 67.5h2M106 67.5h1M124 67.5h1M130 67.5h1M139 67.5h1M142 67.5h1M149 67.5h1M161 67.5h1M163 67.5h1M192 67.5h1M197 67.5h1M204 67.5h1M211 67.5h1M213 67.5h1M221 67.5h1M226 67.5h1M235 67.5h2M257 67.5h1M261 67.5h1M6 68.5h1M22 68.5h1M30 68.5h1M52 68.5h1M65 68.5h1M72 68.5h1M74 68.5h1M79 68.5h1M81 68.5h1M115 68.5h2M128 68.5h1M131 68.5h1M139 68.5h2M148 68.5h1M167 68.5h1M174 68.5h1M178 68.5h1M181 68.5h2M203 68.5h1M210 68.5h1M221 68.5h1M232 68.5h1M240 68.5h1M254 68.5h1M259 68.5h1M6 69.5h1M9 69.5h1M17 69.5h1M19 69.5h1M32 69.5h2M39 69.5h1M63 69.5h1M92 69.5h1M98 69.5h1M105 69.5h1M121 69.5h1M129 69.5h1M135 69.5h2M146 69.5h1M160 69.5h1M163 69.5h2M169 69.5h1M181 69.5h1M187 69.5h1M189 69.5h1M197 69.5h1M206 69.5h3M213 69.5h1M232 69.5h1M257 69.5h1M7 70.5h1M16 70.5h1M38 70.5h1M66 70.5h1M76 70.5h1M96 70.5h1M108 70.5h1M154 70.5h2M160 70.5h1M165 70.5h1M209 70.5h1M234 70.5h1M260 70.5h1M7 71.5h1M11 71.5h1M15 71.5h1M21 71.5h1M32 71.5h1M47 71.5h1M55 71.5h1M61 71.5h1M67 71.5h1M77 71.5h1M97 71.5h1M101 71.5h1M146 71.5h2M159 71.5h1M165 71.5h1M199 71.5h1M205 71.5h1M213 71.5h1M223 71.5h1M233 71.5h1M240 71.5h1M255 71.5h1M259 71.5h1M26 72.5h1M28 72.5h1M51 72.5h1M58 72.5h1M66 72.5h1M69 72.5h1M79 72.5h1M99 72.5h1M102 72.5h1M115 72.5h1M117 72.5h1M122 72.5h1M128 72.5h2M135 72.5h1M144 72.5h1M164 72.5h1M171 72.5h1M173 72.5h1M177 72.5h1M188 72.5h1M192 72.5h1M196 72.5h1M202 72.5h1M208 72.5h1M225 72.5h1M228 72.5h1M245 72.5h1M253 72.5h1M9 73.5h1M13 73.5h2M29 73.5h1M33 73.5h1M52 73.5h1M54 73.5h3M61 73.5h2M64 73.5h1M68 73.5h1M73 73.5h1M91 73.5h2M96 73.5h1M102 73.5h1M109 73.5h1M123 73.5h1M128 73.5h1M131 73.5h1M145 73.5h1M149 73.5h2M152 73.5h1M155 73.5h1M187 73.5h1M191 73.5h1M203 73.5h1M212 73.5h1M228 73.5h1M231 73.5h1M236 73.5h1M13 74.5h1M27 74.5h1M34 74.5h1M48 74.5h2M78 74.5h2M83 74.5h1M108 74.5h1M126 74.5h1M143 74.5h1M147 74.5h1M166 74.5h1M168 74.5h1M184 74.5h1M192 74.5h1M194 74.5h1M197 74.5h1M199 74.5h1M201 74.5h1M206 74.5h1M208 74.5h1M210 74.5h1M216 74.5h1M222 74.5h1M229 74.5h1M231 74.5h1M233 74.5h1M254 74.5h3M261 74.5h1M29 75.5h1M42 75.5h1M62 75.5h1M70 75.5h1M82 75.5h1M95 75.5h1M102 75.5h1M107 75.5h1M109 75.5h1M114 75.5h1M135 75.5h1M137 75.5h1M142 75.5h1M145 75.5h1M183 75.5h1M203 75.5h1M220 75.5h1M227 75.5h1M233 75.5h1M252 75.5h1M260 75.5h1M10 76.5h1M16 76.5h1M19 76.5h1M23 76.5h1M30 76.5h1M49 76.5h2M57 76.5h1M77 76.5h1M81 76.5h1M98 76.5h1M124 76.5h2M127 76.5h1M151 76.5h1M156 76.5h1M160 76.5h1M172 76.5h1M182 76.5h1M185 76.5h1M194 76.5h1M207 76.5h1M210 76.5h1M214 76.5h1M217 76.5h1M224 76.5h1M228 76.5h1M246 76.5h1M248 76.5h1M255 76.5h1M258 76.5h1M260 76.5h1M7 77.5h1M11 77.5h1M26 77.5h1M29 77.5h1M41 77.5h1M90 77.5h1M107 77.5h1M114 77.5h1M117 77.5h1M136 77.5h1M159 77.5h1M166 77.5h1M172 77.5h1M202 77.5h1M210 77.5h1M216 77.5h1M224 77.5h1M244 77.5h1M6 78.5h1M12 78.5h1M25 78.5h1M41 78.5h1M46 78.5h1M52 78.5h1M59 78.5h1M65 78.5h1M71 78.5h1M79 78.5h1M82 78.5h1M84 78.5h1M87 78.5h1M94 78.5h2M99 78.5h1M102 78.5h1M105 78.5h1M115 78.5h1M128 78.5h1M136 78.5h1M144 78.5h1M155 78.5h1M158 78.5h1M169 78.5h1M172 78.5h1M177 78.5h1M181 78.5h1M184 78.5h1M200 78.5h2M222 78.5h2M227 78.5h1M249 78.5h1M8 79.5h1M10 79.5h1M13 79.5h1M16 79.5h1M18 79.5h1M24 79.5h2M43 79.5h1M47 79.5h1M51 79.5h1M62 79.5h2M66 79.5h1M75 79.5h1M84 79.5h1M99 79.5h1M138 79.5h1M140 79.5h1M146 79.5h1M148 79.5h2M157 79.5h1M167 79.5h2M177 79.5h1M189 79.5h1M193 79.5h2M215 79.5h2M222 79.5h1M238 79.5h1M240 79.5h1M246 79.5h2M249 79.5h1M7 80.5h1M13 80.5h1M17 80.5h1M30 80.5h2M37 80.5h1M46 80.5h1M53 80.5h1M60 80.5h2M71 80.5h2M79 80.5h1M87 80.5h1M101 80.5h1M141 80.5h1M148 80.5h1M177 80.5h1M193 80.5h2M202 80.5h1M207 80.5h1M223 80.5h1M229 80.5h1M233 80.5h1M261 80.5h1M22 81.5h1M33 81.5h1M36 81.5h1M40 81.5h1M46 81.5h1M48 81.5h1M81 81.5h1M84 81.5h1M88 81.5h1M116 81.5h1M124 81.5h1M129 81.5h1M138 81.5h1M151 81.5h1M154 81.5h1M162 81.5h1M170 81.5h1M180 81.5h1M195 81.5h1M200 81.5h1M208 81.5h1M214 81.5h1M217 81.5h1M229 81.5h1M233 81.5h1M237 81.5h1M253 81.5h1M9 82.5h1M24 82.5h1M27 82.5h1M30 82.5h1M37 82.5h1M39 82.5h1M52 82.5h1M55 82.5h1M57 82.5h1M64 82.5h1M67 82.5h1M70 82.5h1M89 82.5h1M98 82.5h2M118 82.5h1M131 82.5h1M153 82.5h1M166 82.5h1M171 82.5h1M174 82.5h1M187 82.5h1M194 82.5h1M200 82.5h1M205 82.5h1M210 82.5h1M216 82.5h1M221 82.5h1M225 82.5h3M235 82.5h3M261 82.5h1M21 83.5h2M32 83.5h1M40 83.5h1M42 83.5h2M45 83.5h1M54 83.5h1M56 83.5h1M65 83.5h1M78 83.5h2M81 83.5h2M86 83.5h1M94 83.5h1M102 83.5h1M106 83.5h1M125 83.5h1M139 83.5h1M147 83.5h1M150 83.5h3M154 83.5h1M166 83.5h2M177 83.5h1M182 83.5h1M186 83.5h1M190 83.5h1M198 83.5h1M224 83.5h1M237 83.5h1M248 83.5h1M6 84.5h1M9 84.5h1M13 84.5h1M25 84.5h1M31 84.5h1M36 84.5h1M38 84.5h1M54 84.5h1M70 84.5h1M74 84.5h1M84 84.5h1M95 84.5h1M114 84.5h1M124 84.5h1M130 84.5h1M141 84.5h1M156 84.5h1M167 84.5h1M198 84.5h1M214 84.5h1M216 84.5h1M219 84.5h1M221 84.5h1M226 84.5h1M233 84.5h1M246 84.5h1M249 84.5h1M257 84.5h1M9 85.5h1M22 85.5h2M39 85.5h2M44 85.5h1M50 85.5h1M73 85.5h1M81 85.5h1M90 85.5h1M92 85.5h3M102 85.5h1M115 85.5h2M122 85.5h1M129 85.5h2M141 85.5h1M173 85.5h1M181 85.5h1M186 85.5h1M192 85.5h1M195 85.5h1M202 85.5h1M206 85.5h1M209 85.5h1M231 85.5h1M233 85.5h1M240 85.5h1M6 86.5h1M9 86.5h1M19 86.5h1M25 86.5h1M40 86.5h1M44 86.5h1M57 86.5h1M67 86.5h2M80 86.5h1M97 86.5h1M99 86.5h1M116 86.5h1M119 86.5h1M125 86.5h1M127 86.5h1M131 86.5h1M134 86.5h1M154 86.5h1M159 86.5h1M166 86.5h1M182 86.5h1M207 86.5h1M209 86.5h1M211 86.5h1M229 86.5h1M243 86.5h2M248 86.5h1M16 87.5h1M19 87.5h1M36 87.5h3M49 87.5h1M56 87.5h1M65 87.5h1M71 87.5h1M83 87.5h1M97 87.5h1M143 87.5h1M148 87.5h1M158 87.5h1M166 87.5h1M183 87.5h1M186 87.5h1M202 87.5h2M213 87.5h1M218 87.5h2M225 87.5h1M236 87.5h1M243 87.5h1M246 87.5h1M250 87.5h2M6 88.5h1M8 88.5h1M15 88.5h1M17 88.5h2M21 88.5h2M32 88.5h1M38 88.5h1M40 88.5h1M43 88.5h1M57 88.5h1M82 88.5h1M92 88.5h1M103 88.5h1M110 88.5h1M123 88.5h1M133 88.5h1M143 88.5h1M156 88.5h1M159 88.5h1M167 88.5h1M174 88.5h1M192 88.5h1M198 88.5h1M218 88.5h1M229 88.5h1M244 88.5h1M261 88.5h1M7 89.5h1M9 89.5h1M18 89.5h1M24 89.5h2M30 89.5h1M44 89.5h1M57 89.5h1M60 89.5h1M73 89.5h2M89 89.5h1M95 89.5h1M97 89.5h1M107 89.5h1M119 89.5h1M129 89.5h1M148 89.5h1M159 89.5h1M166 89.5h1M170 89.5h1M174 89.5h2M185 89.5h1M189 89.5h1M194 89.5h1M204 89.5h1M213 89.5h1M223 89.5h1M250 89.5h2M7 90.5h1M12 90.5h1M24 90.5h1M27 90.5h1M29 90.5h1M40 90.5h1M74 90.5h1M79 90.5h1M83 90.5h1M99 90.5h1M105 90.5h1M149 90.5h1M162 90.5h1M164 90.5h1M174 90.5h1M176 90.5h1M197 90.5h1M205 90.5h1M208 90.5h1M218 90.5h1M224 90.5h1M241 90.5h1M248 90.5h1M259 90.5h1M13 91.5h1M15 91.5h1M25 91.5h1M50 91.5h1M52 91.5h1M55 91.5h1M61 91.5h1M64 91.5h2M98 91.5h1M101 91.5h1M103 91.5h1M123 91.5h1M130 91.5h2M134 91.5h1M136 91.5h1M140 91.5h1M149 91.5h1M158 91.5h3M162 91.5h2M172 91.5h1M192 91.5h1M195 91.5h1M199 91.5h1M201 91.5h1M211 91.5h1M217 91.5h1M227 91.5h1M239 91.5h1M246 91.5h1M261 91.5h1M6 92.5h1M9 92.5h1M33 92.5h1M52 92.5h1M61 92.5h1M67 92.5h1M85 92.5h1M97 92.5h1M100 92.5h1M106 92.5h1M119 92.5h1M128 92.5h1M131 92.5h1M136 92.5h1M146 92.5h1M149 92.5h1M156 92.5h1M161 92.5h1M168 92.5h1M180 92.5h1M188 92.5h1M199 92.5h1M205 92.5h1M217 92.5h1M219 92.5h1M246 92.5h1M256 92.5h1M6 93.5h1M8 93.5h1M43 93.5h1M56 93.5h1M58 93.5h1M64 93.5h1M69 93.5h1M72 93.5h2M80 93.5h1M82 93.5h1M89 93.5h1M140 93.5h1M161 93.5h1M196 93.5h2M209 93.5h1M216 93.5h1M219 93.5h1M231 93.5h1M237 93.5h1M241 93.5h1M249 93.5h1M16 94.5h1M38 94.5h1M40 94.5h1M49 94.5h1M73 94.5h1M80 94.5h1M82 94.5h1M93 94.5h1M98 94.5h1M109 94.5h1M111 94.5h1M123 94.5h1M125 94.5h1M127 94.5h1M135 94.5h1M139 94.5h1M143 94.5h1M147 94.5h1M149 94.5h1M171 94.5h1M173 94.5h1M178 94.5h2M184 94.5h1M192 94.5h1M214 94.5h1M217 94.5h1M224 94.5h1M230 94.5h3M238 94.5h1M28 95.5h1M35 95.5h1M47 95.5h1M55 95.5h1M72 95.5h1M76 95.5h2M104 95.5h1M106 95.5h1M120 95.5h1M125 95.5h1M135 95.5h2M164 95.5h1M185 95.5h1M204 95.5h3M230 95.5h1M243 95.5h1M255 95.5h1M12 96.5h1M16 96.5h1M35 96.5h1M49 96.5h1M56 96.5h1M62 96.5h1M68 96.5h1M88 96.5h1M111 96.5h1M116 96.5h1M119 96.5h1M121 96.5h1M135 96.5h1M140 96.5h1M142 96.5h1M148 96.5h1M155 96.5h1M168 96.5h1M187 96.5h1M198 96.5h1M221 96.5h1M223 96.5h1M229 96.5h1M243 96.5h1M247 96.5h1M259 96.5h1M12 97.5h2M21 97.5h1M43 97.5h2M46 97.5h2M59 97.5h1M61 97.5h1M85 97.5h1M97 97.5h1M100 97.5h1M115 97.5h1M117 97.5h1M124 97.5h1M141 97.5h1M166 97.5h1M180 97.5h1M182 97.5h1M203 97.5h2M211 97.5h1M218 97.5h2M234 97.5h1M247 97.5h1M257 97.5h1M7 98.5h1M36 98.5h1M38 98.5h1M40 98.5h1M51 98.5h1M56 98.5h1M58 98.5h1M65 98.5h1M83 98.5h2M99 98.5h1M101 98.5h1M108 98.5h1M126 98.5h1M130 98.5h1M141 98.5h1M143 98.5h1M163 98.5h1M219 98.5h1M233 98.5h1M247 98.5h1M255 98.5h1M261 98.5h1M7 99.5h1M13 99.5h1M19 99.5h1M43 99.5h1M51 99.5h1M56 99.5h1M60 99.5h1M69 99.5h1M82 99.5h1M86 99.5h1M114 99.5h2M126 99.5h1M142 99.5h1M153 99.5h2M171 99.5h1M186 99.5h1M189 99.5h1M191 99.5h1M200 99.5h2M205 99.5h1M218 99.5h1M241 99.5h1M246 99.5h1M248 99.5h1M254 99.5h1M259 99.5h1M6 100.5h1M10 100.5h1M22 100.5h1M30 100.5h2M57 100.5h1M63 100.5h3M87 100.5h3M91 100.5h1M95 100.5h1M97 100.5h1M107 100.5h2M110 100.5h1M116 100.5h1M118 100.5h2M142 100.5h1M160 100.5h2M163 100.5h1M210 100.5h1M237 100.5h1M239 100.5h1M243 100.5h1M253 100.5h2M259 100.5h1M11 101.5h1M21 101.5h1M24 101.5h1M37 101.5h2M40 101.5h1M46 101.5h1M77 101.5h1M95 101.5h1M101 101.5h1M113 101.5h1M116 101.5h1M127 101.5h1M130 101.5h1M142 101.5h1M154 101.5h1M156 101.5h2M162 101.5h2M166 101.5h1M172 101.5h1M175 101.5h1M189 101.5h1M202 101.5h1M207 101.5h1M217 101.5h1M224 101.5h2M243 101.5h1M245 101.5h1M12 102.5h2M22 102.5h1M27 102.5h1M34 102.5h1M39 102.5h2M45 102.5h1M50 102.5h1M54 102.5h1M62 102.5h1M71 102.5h1M74 102.5h1M79 102.5h1M99 102.5h1M115 102.5h1M119 102.5h1M123 102.5h1M142 102.5h1M145 102.5h1M149 102.5h1M158 102.5h1M163 102.5h1M165 102.5h1M169 102.5h1M176 102.5h1M181 102.5h1M197 102.5h1M213 102.5h1M236 102.5h1M246 102.5h1M249 102.5h1M257 102.5h1M261 102.5h1M8 103.5h1M28 103.5h1M32 103.5h1M45 103.5h2M49 103.5h1M56 103.5h1M60 103.5h1M70 103.5h1M78 103.5h1M81 103.5h2M106 103.5h1M134 103.5h1M164 103.5h1M169 103.5h1M191 103.5h1M197 103.5h1M205 103.5h1M219 103.5h1M261 103.5h1M31 104.5h1M36 104.5h2M71 104.5h1M84 104.5h1M88 104.5h1M94 104.5h1M99 104.5h1M104 104.5h1M114 104.5h1M122 104.5h1M129 104.5h1M131 104.5h1M145 104.5h1M151 104.5h1M156 104.5h1M161 104.5h1M175 104.5h1M178 104.5h1M216 104.5h1M225 104.5h2M230 104.5h1M254 104.5h1M256 104.5h1M8 105.5h1M13 105.5h1M16 105.5h1M31 105.5h1M33 105.5h1M40 105.5h1M44 105.5h1M66 105.5h1M78 105.5h1M100 105.5h1M123 105.5h1M126 105.5h1M148 105.5h1M152 105.5h1M163 105.5h1M196 105.5h1M199 105.5h1M202 105.5h2M226 105.5h1M230 105.5h2M241 105.5h1M7 106.5h1M16 106.5h1M42 106.5h1M47 106.5h1M52 106.5h1M54 106.5h1M56 106.5h1M63 106.5h1M84 106.5h2M95 106.5h2M121 106.5h2M128 106.5h1M136 106.5h1M151 106.5h1M162 106.5h1M171 106.5h1M173 106.5h1M176 106.5h2M186 106.5h1M219 106.5h1M236 106.5h1M238 106.5h1M243 106.5h1M250 106.5h1M6 107.5h1M14 107.5h1M31 107.5h1M38 107.5h1M44 107.5h2M48 107.5h1M50 107.5h1M52 107.5h1M58 107.5h1M82 107.5h1M110 107.5h1M151 107.5h1M156 107.5h1M161 107.5h1M167 107.5h1M176 107.5h1M187 107.5h1M196 107.5h1M209 107.5h1M212 107.5h2M224 107.5h1M242 107.5h1M252 107.5h1M24 108.5h1M31 108.5h1M38 108.5h2M46 108.5h2M60 108.5h2M67 108.5h1M71 108.5h1M81 108.5h1M87 108.5h1M89 108.5h1M98 108.5h1M101 108.5h1M115 108.5h1M144 108.5h1M147 108.5h1M161 108.5h1M166 108.5h1M185 108.5h1M206 108.5h1M218 108.5h1M220 108.5h1M222 108.5h1M226 108.5h1M240 108.5h1M250 108.5h1M255 108.5h1M8 109.5h1M16 109.5h1M25 109.5h1M29 109.5h1M31 109.5h1M37 109.5h2M44 109.5h1M48 109.5h1M69 109.5h1M77 109.5h1M88 109.5h1M91 109.5h1M110 109.5h1M116 109.5h1M122 109.5h1M130 109.5h1M133 109.5h1M135 109.5h1M142 109.5h1M155 109.5h1M163 109.5h1M176 109.5h1M208 109.5h1M211 109.5h2M224 109.5h1M246 109.5h1M250 109.5h1M10 110.5h1M14 110.5h1M35 110.5h1M58 110.5h1M80 110.5h1M84 110.5h1M90 110.5h2M102 110.5h1M110 110.5h1M121 110.5h1M124 110.5h1M138 110.5h1M147 110.5h2M151 110.5h1M163 110.5h1M167 110.5h1M170 110.5h1M172 110.5h2M175 110.5h1M193 110.5h1M206 110.5h1M208 110.5h1M222 110.5h1M225 110.5h1M236 110.5h1M249 110.5h1M258 110.5h1M261 110.5h1M9 111.5h2M15 111.5h1M26 111.5h2M43 111.5h1M46 111.5h1M53 111.5h4M63 111.5h1M75 111.5h1M81 111.5h2M88 111.5h1M93 111.5h1M112 111.5h2M115 111.5h1M122 111.5h1M124 111.5h1M139 111.5h1M159 111.5h1M180 111.5h1M204 111.5h1M216 111.5h1M239 111.5h1M244 111.5h1M250 111.5h1M256 111.5h1M13 112.5h1M25 112.5h1M28 112.5h1M42 112.5h1M45 112.5h1M51 112.5h1M54 112.5h1M75 112.5h1M81 112.5h2M95 112.5h1M110 112.5h1M129 112.5h1M146 112.5h1M156 112.5h1M164 112.5h1M184 112.5h2M209 112.5h1M215 112.5h1M229 112.5h1M233 112.5h1M247 112.5h1M249 112.5h1M8 113.5h1M14 113.5h1M47 113.5h2M52 113.5h1M54 113.5h1M82 113.5h1M92 113.5h1M116 113.5h1M135 113.5h2M141 113.5h2M154 113.5h1M168 113.5h1M184 113.5h1M186 113.5h1M188 113.5h1M216 113.5h1M222 113.5h1M226 113.5h1M230 113.5h1M239 113.5h1M243 113.5h1M258 113.5h4M9 114.5h1M25 114.5h1M40 114.5h1M66 114.5h1M68 114.5h1M73 114.5h1M89 114.5h1M98 114.5h2M108 114.5h1M111 114.5h1M119 114.5h1M130 114.5h1M136 114.5h1M141 114.5h1M147 114.5h1M165 114.5h1M172 114.5h1M176 114.5h1M183 114.5h1M185 114.5h1M190 114.5h1M193 114.5h1M209 114.5h1M224 114.5h1M238 114.5h1M242 114.5h1M246 114.5h1M258 114.5h1M8 115.5h2M17 115.5h2M20 115.5h1M30 115.5h1M40 115.5h2M72 115.5h1M74 115.5h1M78 115.5h1M93 115.5h1M106 115.5h1M112 115.5h1M121 115.5h1M138 115.5h1M140 115.5h1M147 115.5h1M156 115.5h1M174 115.5h1M190 115.5h1M199 115.5h1M201 115.5h1M214 115.5h1M216 115.5h1M223 115.5h1M252 115.5h1M259 115.5h1M6 116.5h1M17 116.5h1M59 116.5h1M63 116.5h1M90 116.5h1M93 116.5h1M98 116.5h1M105 116.5h1M129 116.5h2M148 116.5h2M162 116.5h1M164 116.5h1M166 116.5h1M178 116.5h1M181 116.5h1M183 116.5h1M186 116.5h3M192 116.5h1M203 116.5h1M208 116.5h1M216 116.5h1M221 116.5h1M228 116.5h1M246 116.5h1M261 116.5h1M6 117.5h1M9 117.5h1M16 117.5h1M25 117.5h1M45 117.5h1M51 117.5h1M58 117.5h2M62 117.5h1M69 117.5h1M89 117.5h1M93 117.5h1M109 117.5h1M117 117.5h1M132 117.5h1M169 117.5h1M176 117.5h1M180 117.5h1M189 117.5h1M191 117.5h1M197 117.5h1M207 117.5h1M225 117.5h1M245 117.5h1M250 117.5h1M260 117.5h1M18 118.5h1M22 118.5h1M28 118.5h1M35 118.5h1M52 118.5h1M63 118.5h1M69 118.5h1M75 118.5h1M81 118.5h1M85 118.5h1M89 118.5h1M94 118.5h1M103 118.5h1M108 118.5h1M114 118.5h1M123 118.5h1M135 118.5h1M138 118.5h1M147 118.5h1M170 118.5h1M173 118.5h1M183 118.5h1M192 118.5h1M194 118.5h1M197 118.5h1M212 118.5h1M216 118.5h1M241 118.5h1M16 119.5h1M35 119.5h1M41 119.5h1M72 119.5h1M81 119.5h1M89 119.5h1M116 119.5h3M129 119.5h2M138 119.5h1M145 119.5h1M152 119.5h1M158 119.5h1M180 119.5h1M189 119.5h1M191 119.5h1M246 119.5h1M257 119.5h1M259 119.5h1M9 120.5h1M16 120.5h1M32 120.5h1M34 120.5h1M36 120.5h1M40 120.5h1M86 120.5h1M90 120.5h1M94 120.5h3M101 120.5h2M104 120.5h1M112 120.5h1M115 120.5h1M135 120.5h1M140 120.5h1M151 120.5h1M157 120.5h2M160 120.5h1M168 120.5h1M171 120.5h1M187 120.5h1M197 120.5h1M201 120.5h1M221 120.5h1M224 120.5h1M227 120.5h2M239 120.5h1M247 120.5h1M253 120.5h1M24 121.5h1M32 121.5h1M40 121.5h1M42 121.5h1M47 121.5h1M73 121.5h1M84 121.5h1M97 121.5h1M113 121.5h1M135 121.5h1M143 121.5h1M183 121.5h1M202 121.5h1M227 121.5h1M231 121.5h1M236 121.5h1M238 121.5h1M244 121.5h1M247 121.5h1M252 121.5h1M255 121.5h1M257 121.5h1M19 122.5h1M26 122.5h1M35 122.5h1M44 122.5h1M56 122.5h1M58 122.5h1M79 122.5h1M90 122.5h1M93 122.5h1M99 122.5h1M111 122.5h1M121 122.5h2M124 122.5h1M137 122.5h1M146 122.5h1M160 122.5h1M165 122.5h1M171 122.5h1M177 122.5h1M180 122.5h1M182 122.5h1M186 122.5h1M194 122.5h1M223 122.5h1M227 122.5h1M233 122.5h1M246 122.5h1M6 123.5h1M15 123.5h1M24 123.5h1M30 123.5h1M37 123.5h1M46 123.5h1M70 123.5h1M82 123.5h1M90 123.5h1M110 123.5h1M125 123.5h1M132 123.5h1M137 123.5h1M152 123.5h1M156 123.5h2M162 123.5h1M168 123.5h2M172 123.5h1M174 123.5h1M176 123.5h1M182 123.5h1M229 123.5h1M244 123.5h2M251 123.5h1M23 124.5h1M26 124.5h1M34 124.5h1M46 124.5h1M52 124.5h1M99 124.5h1M103 124.5h1M109 124.5h1M113 124.5h1M117 124.5h1M123 124.5h1M127 124.5h1M129 124.5h1M141 124.5h1M148 124.5h1M153 124.5h1M158 124.5h1M162 124.5h1M164 124.5h1M180 124.5h1M189 124.5h1M203 124.5h1M215 124.5h1M218 124.5h1M229 124.5h1M237 124.5h1M248 124.5h1M12 125.5h1M19 125.5h1M41 125.5h1M43 125.5h1M46 125.5h1M54 125.5h1M63 125.5h1M68 125.5h1M75 125.5h1M79 125.5h1M84 125.5h1M89 125.5h1M99 125.5h1M108 125.5h1M122 125.5h1M128 125.5h1M142 125.5h1M146 125.5h1M152 125.5h1M164 125.5h1M177 125.5h1M183 125.5h1M187 125.5h1M190 125.5h1M193 125.5h2M198 125.5h1M201 125.5h1M216 125.5h1M223 125.5h1M234 125.5h1M249 125.5h1M257 125.5h1M7 126.5h1M29 126.5h1M31 126.5h1M47 126.5h1M56 126.5h1M58 126.5h1M66 126.5h1M75 126.5h1M89 126.5h1M97 126.5h1M106 126.5h1M110 126.5h1M141 126.5h1M145 126.5h1M167 126.5h1M176 126.5h1M206 126.5h1M220 126.5h1M247 126.5h1M38 127.5h1M43 127.5h2M63 127.5h1M67 127.5h1M80 127.5h1M93 127.5h1M96 127.5h2M105 127.5h1M116 127.5h1M118 127.5h1M126 127.5h1M138 127.5h1M144 127.5h1M152 127.5h1M167 127.5h1M170 127.5h1M173 127.5h1M192 127.5h1M196 127.5h1M213 127.5h1M221 127.5h1M242 127.5h1M257 127.5h1M7 128.5h1M17 128.5h1M89 128.5h1M92 128.5h1M111 128.5h1M121 128.5h2M133 128.5h1M141 128.5h1M145 128.5h2M164 128.5h2M170 128.5h1M176 128.5h1M178 128.5h1M193 128.5h1M202 128.5h1M208 128.5h1M210 128.5h1M215 128.5h1M219 128.5h1M229 128.5h1M232 128.5h1M238 128.5h1M243 128.5h1M245 128.5h1M9 129.5h1M20 129.5h1M23 129.5h1M26 129.5h1M30 129.5h1M39 129.5h1M42 129.5h1M57 129.5h1M65 129.5h1M76 129.5h1M80 129.5h1M83 129.5h1M87 129.5h1M90 129.5h1M104 129.5h1M135 129.5h1M138 129.5h1M148 129.5h1M151 129.5h1M159 129.5h1M170 129.5h1M178 129.5h1M185 129.5h1M200 129.5h1M202 129.5h1M211 129.5h1M239 129.5h2M17 130.5h1M42 130.5h1M53 130.5h1M56 130.5h1M69 130.5h1M91 130.5h1M99 130.5h1M105 130.5h2M120 130.5h1M129 130.5h1M147 130.5h1M153 130.5h1M165 130.5h1M167 130.5h1M182 130.5h1M184 130.5h2M234 130.5h1M243 130.5h1M246 130.5h1M259 130.5h1M261 130.5h1M10 131.5h1M12 131.5h3M59 131.5h1M73 131.5h1M100 131.5h1M105 131.5h1M111 131.5h1M121 131.5h1M136 131.5h1M142 131.5h1M146 131.5h2M165 131.5h1M178 131.5h1M187 131.5h1M213 131.5h1M260 131.5h1M6 132.5h1M8 132.5h1M15 132.5h1M19 132.5h1M39 132.5h1M73 132.5h2M80 132.5h1M83 132.5h1M91 132.5h1M125 132.5h1M129 132.5h1M134 132.5h1M173 132.5h1M183 132.5h1M190 132.5h1M194 132.5h1M203 132.5h1M208 132.5h1M210 132.5h1M214 132.5h1M221 132.5h2M232 132.5h2M249 132.5h2M261 132.5h1M38 133.5h1M51 133.5h1M71 133.5h1M101 133.5h1M103 133.5h1M107 133.5h2M115 133.5h1M118 133.5h1M130 133.5h1M139 133.5h1M142 133.5h2M145 133.5h1M149 133.5h1M160 133.5h1M167 133.5h1M187 133.5h1M189 133.5h1M198 133.5h1M211 133.5h2M214 133.5h1M224 133.5h1M237 133.5h1M239 133.5h1M243 133.5h1M245 133.5h1M248 133.5h1M6 134.5h1M12 134.5h1M34 134.5h1M46 134.5h1M77 134.5h1M83 134.5h1M90 134.5h1M92 134.5h1M96 134.5h2M104 134.5h1M110 134.5h2M116 134.5h1M122 134.5h1M126 134.5h1M128 134.5h1M131 134.5h1M139 134.5h1M149 134.5h1M157 134.5h1M165 134.5h1M169 134.5h1M171 134.5h1M176 134.5h1M178 134.5h1M183 134.5h1M187 134.5h1M194 134.5h1M223 134.5h1M252 134.5h1M258 134.5h1M17 135.5h1M25 135.5h2M29 135.5h1M74 135.5h1M82 135.5h1M85 135.5h1M94 135.5h2M97 135.5h1M109 135.5h1M111 135.5h1M125 135.5h2M128 135.5h1M136 135.5h1M139 135.5h2M144 135.5h1M159 135.5h1M165 135.5h1M177 135.5h1M197 135.5h1M214 135.5h1M220 135.5h1M227 135.5h1M232 135.5h1M234 135.5h1M237 135.5h1M239 135.5h2M244 135.5h1M260 135.5h1M9 136.5h1M15 136.5h2M20 136.5h1M23 136.5h1M31 136.5h1M34 136.5h1M53 136.5h1M59 136.5h1M61 136.5h1M67 136.5h1M69 136.5h1M75 136.5h1M96 136.5h1M114 136.5h2M126 136.5h1M128 136.5h1M134 136.5h1M146 136.5h1M152 136.5h1M154 136.5h1M158 136.5h1M166 136.5h1M168 136.5h2M172 136.5h1M175 136.5h1M181 136.5h1M186 136.5h1M193 136.5h1M210 136.5h1M213 136.5h1M218 136.5h2M224 136.5h1M227 136.5h1M233 136.5h2M251 136.5h1M7 137.5h1M17 137.5h1M38 137.5h1M41 137.5h1M66 137.5h1M76 137.5h1M101 137.5h1M103 137.5h1M108 137.5h1M121 137.5h1M126 137.5h1M137 137.5h1M151 137.5h1M155 137.5h1M168 137.5h1M171 137.5h1M201 137.5h1M207 137.5h1M230 137.5h1M234 137.5h1M252 137.5h2M11 138.5h1M16 138.5h1M23 138.5h1M34 138.5h1M41 138.5h1M44 138.5h1M56 138.5h1M62 138.5h1M66 138.5h2M79 138.5h1M112 138.5h1M118 138.5h1M124 138.5h1M147 138.5h1M150 138.5h1M168 138.5h1M172 138.5h1M182 138.5h1M188 138.5h1M196 138.5h1M200 138.5h1M204 138.5h1M208 138.5h1M212 138.5h1M227 138.5h1M237 138.5h1M240 138.5h1M255 138.5h1M30 139.5h1M36 139.5h1M45 139.5h1M49 139.5h1M53 139.5h1M55 139.5h1M72 139.5h1M86 139.5h1M92 139.5h1M127 139.5h1M133 139.5h1M135 139.5h1M143 139.5h2M160 139.5h1M168 139.5h1M171 139.5h1M179 139.5h1M186 139.5h2M227 139.5h1M231 139.5h1M235 139.5h1M237 139.5h1M245 139.5h1M252 139.5h1M256 139.5h1M260 139.5h1M10 140.5h1M35 140.5h1M57 140.5h2M64 140.5h1M88 140.5h2M94 140.5h2M101 140.5h1M107 140.5h1M112 140.5h1M114 140.5h1M120 140.5h1M135 140.5h1M144 140.5h2M152 140.5h1M182 140.5h1M186 140.5h1M190 140.5h3M230 140.5h1M249 140.5h2M258 140.5h1M261 140.5h1M14 141.5h1M17 141.5h1M26 141.5h1M31 141.5h1M36 141.5h2M41 141.5h2M55 141.5h2M60 141.5h1M69 141.5h1M87 141.5h1M91 141.5h1M99 141.5h1M101 141.5h1M135 141.5h1M142 141.5h1M170 141.5h2M177 141.5h1M179 141.5h1M184 141.5h1M187 141.5h1M215 141.5h1M225 141.5h1M228 141.5h1M249 141.5h1M255 141.5h2M6 142.5h1M21 142.5h1M55 142.5h2M66 142.5h2M75 142.5h1M101 142.5h1M125 142.5h2M128 142.5h1M131 142.5h1M142 142.5h1M160 142.5h2M165 142.5h1M169 142.5h1M181 142.5h1M186 142.5h1M196 142.5h1M209 142.5h2M215 142.5h1M219 142.5h1M229 142.5h2M233 142.5h1M243 142.5h1M255 142.5h1M6 143.5h2M11 143.5h1M21 143.5h1M27 143.5h1M34 143.5h1M48 143.5h1M52 143.5h2M74 143.5h2M89 143.5h1M94 143.5h1M99 143.5h1M106 143.5h1M128 143.5h1M176 143.5h1M179 143.5h1M188 143.5h3M192 143.5h1M196 143.5h1M212 143.5h1M218 143.5h1M224 143.5h2M235 143.5h1M237 143.5h1M253 143.5h4M258 143.5h1M18 144.5h1M35 144.5h1M37 144.5h1M79 144.5h1M87 144.5h1M89 144.5h1M91 144.5h1M105 144.5h1M110 144.5h1M112 144.5h1M128 144.5h1M136 144.5h1M155 144.5h1M164 144.5h1M168 144.5h1M184 144.5h1M186 144.5h1M189 144.5h1M204 144.5h1M211 144.5h1M236 144.5h1M261 144.5h1M6 145.5h2M43 145.5h1M48 145.5h1M54 145.5h1M67 145.5h1M69 145.5h1M78 145.5h1M80 145.5h1M99 145.5h1M123 145.5h1M134 145.5h1M140 145.5h1M142 145.5h1M154 145.5h1M163 145.5h1M177 145.5h1M184 145.5h1M218 145.5h2M221 145.5h2M225 145.5h1M243 145.5h1M246 145.5h1M254 145.5h1M11 146.5h1M23 146.5h1M45 146.5h1M47 146.5h1M65 146.5h1M70 146.5h1M75 146.5h1M80 146.5h1M89 146.5h1M128 146.5h1M133 146.5h3M146 146.5h1M159 146.5h1M167 146.5h1M179 146.5h1M193 146.5h1M215 146.5h1M217 146.5h1M220 146.5h1M228 146.5h1M247 146.5h1M8 147.5h1M28 147.5h1M32 147.5h2M49 147.5h1M58 147.5h1M63 147.5h1M70 147.5h1M80 147.5h1M93 147.5h1M97 147.5h1M125 147.5h1M131 147.5h1M135 147.5h1M149 147.5h2M157 147.5h2M161 147.5h1M163 147.5h1M170 147.5h1M189 147.5h1M191 147.5h1M203 147.5h1M223 147.5h1M228 147.5h1M240 147.5h1M252 147.5h1M260 147.5h2M44 148.5h1M46 148.5h1M58 148.5h1M63 148.5h1M68 148.5h1M74 148.5h1M76 148.5h1M78 148.5h1M81 148.5h1M106 148.5h1M108 148.5h2M115 148.5h1M118 148.5h1M141 148.5h1M155 148.5h2M169 148.5h1M174 148.5h1M177 148.5h2M180 148.5h2M183 148.5h2M188 148.5h1M192 148.5h1M196 148.5h1M202 148.5h2M208 148.5h1M215 148.5h1M217 148.5h1M253 148.5h1M14 149.5h1M40 149.5h2M45 149.5h1M47 149.5h1M52 149.5h1M55 149.5h1M67 149.5h1M81 149.5h1M84 149.5h1M94 149.5h1M105 149.5h1M116 149.5h1M120 149.5h1M125 149.5h1M130 149.5h1M161 149.5h1M181 149.5h1M210 149.5h1M231 149.5h1M236 149.5h1M241 149.5h1M10 150.5h1M24 150.5h1M35 150.5h1M46 150.5h1M48 150.5h1M50 150.5h1M56 150.5h2M65 150.5h1M75 150.5h1M85 150.5h1M95 150.5h1M97 150.5h1M106 150.5h1M121 150.5h1M123 150.5h1M143 150.5h2M148 150.5h1M152 150.5h1M156 150.5h2M174 150.5h1M192 150.5h1M204 150.5h2M213 150.5h1M217 150.5h1M225 150.5h1M227 150.5h1M238 150.5h1M253 150.5h1M7 151.5h1M13 151.5h1M18 151.5h1M25 151.5h2M28 151.5h1M31 151.5h1M35 151.5h1M37 151.5h1M40 151.5h1M50 151.5h1M69 151.5h1M83 151.5h1M87 151.5h2M95 151.5h1M97 151.5h1M127 151.5h1M162 151.5h1M172 151.5h1M175 151.5h1M203 151.5h1M208 151.5h1M214 151.5h1M227 151.5h1M231 151.5h1M235 151.5h2M242 151.5h1M246 151.5h1M248 151.5h1M253 151.5h1M12 152.5h1M25 152.5h1M40 152.5h1M44 152.5h1M75 152.5h1M94 152.5h1M97 152.5h1M99 152.5h2M117 152.5h1M119 152.5h1M121 152.5h1M131 152.5h1M135 152.5h2M141 152.5h1M149 152.5h1M173 152.5h1M185 152.5h1M201 152.5h1M223 152.5h1M225 152.5h1M232 152.5h1M237 152.5h1M257 152.5h1M7 153.5h1M9 153.5h1M13 153.5h1M19 153.5h1M24 153.5h1M32 153.5h2M50 153.5h2M55 153.5h1M58 153.5h1M60 153.5h1M65 153.5h2M76 153.5h1M80 153.5h1M96 153.5h1M102 153.5h1M114 153.5h1M129 153.5h1M135 153.5h2M159 153.5h1M177 153.5h1M181 153.5h1M183 153.5h1M203 153.5h1M223 153.5h1M225 153.5h1M230 153.5h1M233 153.5h1M236 153.5h1M244 153.5h1M249 153.5h1M12 154.5h1M22 154.5h1M36 154.5h1M56 154.5h1M63 154.5h1M65 154.5h2M74 154.5h1M90 154.5h1M105 154.5h1M116 154.5h1M119 154.5h1M125 154.5h1M132 154.5h1M135 154.5h2M146 154.5h1M156 154.5h1M175 154.5h1M185 154.5h1M194 154.5h1M200 154.5h1M202 154.5h1M213 154.5h1M234 154.5h1M247 154.5h1M20 155.5h1M26 155.5h1M36 155.5h1M56 155.5h1M58 155.5h2M84 155.5h1M87 155.5h1M94 155.5h1M98 155.5h1M116 155.5h2M129 155.5h1M136 155.5h1M150 155.5h1M168 155.5h2M174 155.5h1M183 155.5h1M189 155.5h1M214 155.5h1M219 155.5h2M223 155.5h1M237 155.5h1M248 155.5h1M250 155.5h1M8 156.5h1M21 156.5h1M28 156.5h1M64 156.5h1M72 156.5h2M79 156.5h1M94 156.5h1M103 156.5h1M109 156.5h1M114 156.5h1M129 156.5h1M132 156.5h2M136 156.5h2M149 156.5h1M152 156.5h1M157 156.5h1M161 156.5h1M171 156.5h2M190 156.5h1M203 156.5h2M213 156.5h2M221 156.5h1M230 156.5h1M37 157.5h1M49 157.5h1M63 157.5h2M89 157.5h1M91 157.5h1M107 157.5h1M122 157.5h1M130 157.5h1M170 157.5h1M173 157.5h1M189 157.5h1M196 157.5h1M203 157.5h1M236 157.5h1M239 157.5h1M243 157.5h1M246 157.5h1M256 157.5h1M259 157.5h1M261 157.5h1M20 158.5h2M46 158.5h1M58 158.5h1M67 158.5h1M73 158.5h2M90 158.5h1M99 158.5h1M101 158.5h1M127 158.5h1M133 158.5h1M144 158.5h1M178 158.5h1M197 158.5h2M200 158.5h1M205 158.5h1M217 158.5h2M226 158.5h2M230 158.5h1M237 158.5h1M12 159.5h1M15 159.5h1M21 159.5h1M50 159.5h1M57 159.5h1M60 159.5h1M63 159.5h1M72 159.5h1M79 159.5h1M88 159.5h1M96 159.5h1M99 159.5h1M101 159.5h1M109 159.5h1M127 159.5h1M148 159.5h1M152 159.5h2M156 159.5h1M164 159.5h1M169 159.5h1M172 159.5h1M187 159.5h1M208 159.5h1M214 159.5h1M234 159.5h1M240 159.5h1M261 159.5h1M36 160.5h1M40 160.5h1M49 160.5h1M51 160.5h1M70 160.5h1M85 160.5h1M97 160.5h1M115 160.5h1M127 160.5h1M146 160.5h2M150 160.5h1M163 160.5h1M170 160.5h2M176 160.5h1M180 160.5h1M198 160.5h1M200 160.5h1M217 160.5h1M231 160.5h1M241 160.5h1M246 160.5h2M8 161.5h2M20 161.5h1M32 161.5h1M37 161.5h1M40 161.5h1M63 161.5h1M82 161.5h2M94 161.5h1M113 161.5h2M120 161.5h1M130 161.5h1M138 161.5h1M157 161.5h1M185 161.5h1M187 161.5h1M220 161.5h1M229 161.5h1M233 161.5h1M235 161.5h1M241 161.5h1M245 161.5h2M251 161.5h1M260 161.5h2M11 162.5h1M15 162.5h1M31 162.5h1M54 162.5h1M61 162.5h1M71 162.5h2M102 162.5h1M113 162.5h1M115 162.5h1M122 162.5h1M126 162.5h1M138 162.5h1M142 162.5h1M152 162.5h1M177 162.5h1M179 162.5h1M198 162.5h1M200 162.5h1M202 162.5h1M204 162.5h1M206 162.5h1M242 162.5h1M260 162.5h1M6 163.5h1M11 163.5h2M14 163.5h1M22 163.5h1M27 163.5h1M32 163.5h1M47 163.5h1M50 163.5h1M57 163.5h1M72 163.5h1M76 163.5h1M91 163.5h1M109 163.5h1M111 163.5h1M118 163.5h1M121 163.5h1M126 163.5h1M139 163.5h4M146 163.5h1M152 163.5h1M157 163.5h1M166 163.5h1M169 163.5h2M187 163.5h1M192 163.5h2M196 163.5h1M200 163.5h4M224 163.5h1M238 163.5h1M250 163.5h1M259 163.5h1M9 164.5h1M19 164.5h1M30 164.5h1M34 164.5h1M50 164.5h1M60 164.5h1M66 164.5h1M84 164.5h2M92 164.5h1M97 164.5h1M112 164.5h1M116 164.5h1M130 164.5h1M133 164.5h1M147 164.5h1M160 164.5h1M168 164.5h1M171 164.5h1M178 164.5h1M182 164.5h2M218 164.5h1M223 164.5h2M232 164.5h1M241 164.5h2M253 164.5h1M260 164.5h1M19 165.5h1M25 165.5h1M27 165.5h1M33 165.5h2M63 165.5h1M65 165.5h1M68 165.5h1M71 165.5h2M76 165.5h1M82 165.5h1M88 165.5h1M104 165.5h1M106 165.5h1M113 165.5h1M118 165.5h1M120 165.5h1M134 165.5h1M141 165.5h1M144 165.5h2M151 165.5h1M181 165.5h2M185 165.5h1M194 165.5h1M196 165.5h1M202 165.5h1M237 165.5h1M9 166.5h1M32 166.5h1M41 166.5h1M50 166.5h1M62 166.5h1M64 166.5h1M73 166.5h1M75 166.5h1M96 166.5h1M120 166.5h1M130 166.5h1M147 166.5h1M155 166.5h1M160 166.5h1M169 166.5h1M177 166.5h1M203 166.5h1M221 166.5h1M227 166.5h1M231 166.5h1M236 166.5h1M247 166.5h1M251 166.5h1M256 166.5h1M22 167.5h1M29 167.5h1M38 167.5h1M42 167.5h1M48 167.5h1M50 167.5h1M52 167.5h1M65 167.5h1M68 167.5h1M75 167.5h1M87 167.5h1M91 167.5h1M96 167.5h1M102 167.5h1M108 167.5h1M120 167.5h1M148 167.5h1M153 167.5h1M157 167.5h1M159 167.5h1M164 167.5h3M171 167.5h1M173 167.5h1M180 167.5h1M183 167.5h1M185 167.5h1M194 167.5h1M198 167.5h1M210 167.5h1M218 167.5h1M223 167.5h1M231 167.5h1M240 167.5h2M252 167.5h1M261 167.5h1M8 168.5h1M20 168.5h1M28 168.5h2M36 168.5h1M53 168.5h1M56 168.5h1M60 168.5h1M63 168.5h1M76 168.5h1M81 168.5h1M86 168.5h1M103 168.5h1M118 168.5h1M120 168.5h1M131 168.5h1M135 168.5h1M142 168.5h2M151 168.5h2M175 168.5h1M182 168.5h2M193 168.5h2M200 168.5h1M209 168.5h1M214 168.5h2M218 168.5h1M229 168.5h1M238 168.5h3M250 168.5h1M257 168.5h2M27 169.5h1M34 169.5h1M37 169.5h1M56 169.5h1M65 169.5h1M73 169.5h1M88 169.5h3M101 169.5h2M105 169.5h1M110 169.5h1M132 169.5h1M143 169.5h1M145 169.5h1M149 169.5h1M156 169.5h1M169 169.5h1M180 169.5h1M183 169.5h1M186 169.5h1M206 169.5h1M218 169.5h1M237 169.5h1M241 169.5h1M248 169.5h1M252 169.5h1M256 169.5h1M16 170.5h1M19 170.5h1M23 170.5h1M31 170.5h1M45 170.5h1M53 170.5h1M72 170.5h1M103 170.5h1M108 170.5h1M155 170.5h1M158 170.5h1M162 170.5h1M178 170.5h1M180 170.5h1M183 170.5h1M191 170.5h1M197 170.5h2M200 170.5h1M207 170.5h1M210 170.5h1M213 170.5h1M215 170.5h1M225 170.5h1M227 170.5h1M229 170.5h1M234 170.5h2M238 170.5h1M7 171.5h1M23 171.5h1M83 171.5h1M88 171.5h1M93 171.5h1M109 171.5h2M112 171.5h1M119 171.5h1M135 171.5h1M138 171.5h1M144 171.5h1M146 171.5h1M152 171.5h1M158 171.5h1M173 171.5h1M175 171.5h1M177 171.5h1M183 171.5h2M201 171.5h1M212 171.5h1M217 171.5h1M224 171.5h1M230 171.5h1M243 171.5h1M250 171.5h1M258 171.5h1M37 172.5h1M51 172.5h1M54 172.5h1M61 172.5h1M64 172.5h1M66 172.5h1M73 172.5h1M83 172.5h1M85 172.5h1M87 172.5h1M101 172.5h1M115 172.5h1M118 172.5h1M167 172.5h1M170 172.5h1M186 172.5h3M190 172.5h4M212 172.5h1M214 172.5h1M219 172.5h1M228 172.5h1M233 172.5h2M244 172.5h2M252 172.5h1M260 172.5h1M6 173.5h2M18 173.5h1M25 173.5h1M32 173.5h1M35 173.5h1M37 173.5h1M42 173.5h1M49 173.5h1M59 173.5h1M62 173.5h1M69 173.5h1M78 173.5h1M93 173.5h1M110 173.5h1M152 173.5h1M154 173.5h1M192 173.5h2M205 173.5h1M216 173.5h1M237 173.5h1M246 173.5h1M258 173.5h1M23 174.5h2M45 174.5h1M48 174.5h1M56 174.5h1M67 174.5h2M93 174.5h1M100 174.5h1M106 174.5h2M129 174.5h2M132 174.5h1M141 174.5h1M146 174.5h1M154 174.5h1M160 174.5h2M211 174.5h1M219 174.5h1M228 174.5h1M234 174.5h1M242 174.5h1M246 174.5h1M249 174.5h1M254 174.5h1M259 174.5h1M10 175.5h1M16 175.5h1M19 175.5h1M24 175.5h1M33 175.5h1M37 175.5h1M51 175.5h2M60 175.5h1M75 175.5h1M77 175.5h1M80 175.5h1M84 175.5h1M95 175.5h1M99 175.5h1M102 175.5h1M105 175.5h2M114 175.5h1M125 175.5h1M133 175.5h1M152 175.5h1M159 175.5h1M162 175.5h1M177 175.5h1M183 175.5h2M189 175.5h1M196 175.5h2M205 175.5h1M218 175.5h1M225 175.5h1M238 175.5h1M240 175.5h1M247 175.5h1M7 176.5h1M27 176.5h1M30 176.5h1M40 176.5h2M43 176.5h1M69 176.5h1M82 176.5h1M89 176.5h1M94 176.5h2M115 176.5h1M132 176.5h1M136 176.5h1M138 176.5h1M140 176.5h1M142 176.5h1M149 176.5h1M156 176.5h1M171 176.5h1M189 176.5h1M192 176.5h1M196 176.5h1M202 176.5h1M209 176.5h1M226 176.5h1M228 176.5h1M231 176.5h1M241 176.5h1M243 176.5h1M248 176.5h1M255 176.5h1M19 177.5h1M35 177.5h1M61 177.5h1M63 177.5h1M69 177.5h1M82 177.5h1M87 177.5h1M90 177.5h1M93 177.5h1M97 177.5h1M108 177.5h1M114 177.5h2M125 177.5h1M144 177.5h1M155 177.5h1M172 177.5h1M199 177.5h1M201 177.5h1M216 177.5h1M223 177.5h1M233 177.5h2M237 177.5h1M239 177.5h1M242 177.5h1M248 177.5h1M12 178.5h1M15 178.5h1M22 178.5h1M25 178.5h1M28 178.5h2M40 178.5h1M44 178.5h1M47 178.5h1M54 178.5h1M60 178.5h1M70 178.5h1M76 178.5h1M95 178.5h1M99 178.5h1M101 178.5h1M112 178.5h1M135 178.5h1M144 178.5h1M148 178.5h1M153 178.5h1M155 178.5h1M163 178.5h1M170 178.5h1M173 178.5h1M181 178.5h1M188 178.5h1M194 178.5h1M196 178.5h2M206 178.5h1M210 178.5h1M214 178.5h1M234 178.5h2M258 178.5h1M13 179.5h1M15 179.5h2M27 179.5h2M34 179.5h1M36 179.5h1M42 179.5h1M67 179.5h1M84 179.5h1M88 179.5h1M93 179.5h1M103 179.5h1M106 179.5h1M111 179.5h1M122 179.5h1M127 179.5h1M133 179.5h1M135 179.5h1M138 179.5h1M156 179.5h1M161 179.5h1M193 179.5h1M200 179.5h1M202 179.5h2M208 179.5h1M212 179.5h1M223 179.5h1M234 179.5h1M245 179.5h1M9 180.5h1M19 180.5h1M22 180.5h1M29 180.5h1M33 180.5h1M62 180.5h2M80 180.5h1M82 180.5h1M97 180.5h1M127 180.5h1M138 180.5h3M144 180.5h1M155 180.5h1M160 180.5h1M182 180.5h1M200 180.5h1M221 180.5h1M230 180.5h1M251 180.5h1M254 180.5h1M17 181.5h1M19 181.5h1M25 181.5h1M30 181.5h2M35 181.5h1M44 181.5h1M54 181.5h2M66 181.5h1M79 181.5h1M86 181.5h1M91 181.5h1M94 181.5h2M100 181.5h2M119 181.5h1M128 181.5h1M146 181.5h1M151 181.5h1M155 181.5h1M157 181.5h1M173 181.5h1M184 181.5h2M190 181.5h1M202 181.5h1M204 181.5h1M217 181.5h2M244 181.5h1M251 181.5h1M7 182.5h1M22 182.5h1M28 182.5h1M53 182.5h1M56 182.5h1M61 182.5h1M72 182.5h1M74 182.5h1M89 182.5h1M98 182.5h1M114 182.5h1M117 182.5h2M138 182.5h1M143 182.5h1M162 182.5h1M166 182.5h1M180 182.5h1M192 182.5h1M196 182.5h1M205 182.5h1M220 182.5h1M242 182.5h1M244 182.5h1M251 182.5h1M256 182.5h1M261 182.5h1M6 183.5h1M14 183.5h1M24 183.5h1M45 183.5h1M51 183.5h1M56 183.5h1M62 183.5h1M64 183.5h1M73 183.5h1M79 183.5h1M81 183.5h1M108 183.5h1M120 183.5h1M127 183.5h1M143 183.5h1M147 183.5h1M152 183.5h1M182 183.5h1M187 183.5h1M216 183.5h1M221 183.5h1M225 183.5h1M229 183.5h1M241 183.5h1M254 183.5h2M40 184.5h1M45 184.5h2M48 184.5h1M55 184.5h1M64 184.5h1M82 184.5h2M98 184.5h1M103 184.5h1M124 184.5h2M131 184.5h3M139 184.5h1M143 184.5h1M163 184.5h1M185 184.5h1M187 184.5h1M190 184.5h1M197 184.5h1M206 184.5h1M208 184.5h1M211 184.5h1M216 184.5h1M233 184.5h1M238 184.5h1M255 184.5h1M260 184.5h1M34 185.5h1M40 185.5h1M45 185.5h1M47 185.5h2M54 185.5h1M74 185.5h1M76 185.5h1M94 185.5h1M104 185.5h1M116 185.5h1M149 185.5h1M152 185.5h1M172 185.5h1M185 185.5h1M187 185.5h1M191 185.5h1M200 185.5h1M213 185.5h1M229 185.5h1M232 185.5h1M238 185.5h2M243 185.5h1M248 185.5h1M251 185.5h1M253 185.5h1M259 185.5h1M10 186.5h1M12 186.5h1M17 186.5h1M34 186.5h1M40 186.5h1M61 186.5h1M63 186.5h1M71 186.5h1M78 186.5h1M83 186.5h1M94 186.5h1M97 186.5h2M100 186.5h1M106 186.5h1M108 186.5h1M124 186.5h1M130 186.5h1M140 186.5h2M150 186.5h1M153 186.5h1M169 186.5h1M183 186.5h1M189 186.5h1M214 186.5h1M220 186.5h1M242 186.5h1M252 186.5h1M12 187.5h1M22 187.5h1M28 187.5h1M41 187.5h1M58 187.5h1M64 187.5h1M69 187.5h1M78 187.5h1M84 187.5h1M112 187.5h1M119 187.5h1M138 187.5h1M143 187.5h1M152 187.5h1M167 187.5h2M174 187.5h1M187 187.5h1M190 187.5h1M193 187.5h1M202 187.5h1M205 187.5h1M225 187.5h1M229 187.5h1M248 187.5h1M261 187.5h1M11 188.5h1M13 188.5h2M27 188.5h1M34 188.5h1M48 188.5h1M55 188.5h1M59 188.5h1M61 188.5h1M73 188.5h1M99 188.5h1M112 188.5h1M116 188.5h1M120 188.5h1M123 188.5h1M126 188.5h1M166 188.5h1M171 188.5h1M193 188.5h1M195 188.5h1M227 188.5h1M252 188.5h1M255 188.5h1M38 189.5h1M49 189.5h1M53 189.5h1M59 189.5h1M68 189.5h1M73 189.5h1M79 189.5h1M95 189.5h1M102 189.5h1M115 189.5h1M119 189.5h1M122 189.5h2M132 189.5h1M138 189.5h1M157 189.5h3M173 189.5h1M198 189.5h1M205 189.5h1M221 189.5h1M229 189.5h1M232 189.5h1M240 189.5h1M244 189.5h1M14 190.5h2M22 190.5h1M30 190.5h1M47 190.5h1M52 190.5h1M59 190.5h1M66 190.5h1M69 190.5h1M71 190.5h1M80 190.5h1M87 190.5h1M99 190.5h1M106 190.5h1M128 190.5h1M131 190.5h1M139 190.5h1M154 190.5h1M165 190.5h1M171 190.5h2M178 190.5h2M187 190.5h1M189 190.5h2M197 190.5h1M199 190.5h2M202 190.5h1M211 190.5h1M213 190.5h1M216 190.5h1M224 190.5h1M229 190.5h1M236 190.5h1M257 190.5h1M6 191.5h1M36 191.5h2M49 191.5h1M57 191.5h1M63 191.5h1M65 191.5h1M87 191.5h1M99 191.5h1M101 191.5h1M118 191.5h1M127 191.5h1M153 191.5h1M156 191.5h1M164 191.5h1M169 191.5h1M176 191.5h1M191 191.5h1M198 191.5h1M200 191.5h1M203 191.5h1M206 191.5h1M216 191.5h1M218 191.5h1M235 191.5h1M255 191.5h1M258 191.5h2M261 191.5h1M10 192.5h1M19 192.5h1M26 192.5h1M37 192.5h1M39 192.5h1M41 192.5h1M54 192.5h1M80 192.5h1M84 192.5h1M87 192.5h1M109 192.5h1M115 192.5h1M118 192.5h1M121 192.5h1M126 192.5h1M137 192.5h1M147 192.5h1M162 192.5h1M173 192.5h1M176 192.5h1M186 192.5h1M189 192.5h1M207 192.5h1M213 192.5h1M244 192.5h1M252 192.5h1M254 192.5h2M259 192.5h1M10 193.5h1M19 193.5h1M26 193.5h1M30 193.5h1M36 193.5h1M41 193.5h1M45 193.5h1M47 193.5h1M50 193.5h1M58 193.5h2M65 193.5h1M76 193.5h1M82 193.5h1M114 193.5h2M132 193.5h1M135 193.5h1M144 193.5h2M151 193.5h1M154 193.5h1M158 193.5h1M182 193.5h1M208 193.5h2M213 193.5h1M221 193.5h1M223 193.5h1M232 193.5h1M245 193.5h1M248 193.5h1M253 193.5h2M7 194.5h1M11 194.5h1M21 194.5h1M24 194.5h1M39 194.5h1M45 194.5h2M57 194.5h1M63 194.5h1M67 194.5h1M79 194.5h1M90 194.5h2M98 194.5h1M103 194.5h1M111 194.5h1M115 194.5h1M122 194.5h1M127 194.5h1M143 194.5h1M147 194.5h1M153 194.5h1M156 194.5h1M158 194.5h1M160 194.5h1M167 194.5h1M185 194.5h1M191 194.5h1M194 194.5h1M202 194.5h1M215 194.5h2M219 194.5h1M244 194.5h1M246 194.5h1M250 194.5h1M258 194.5h2M15 195.5h2M18 195.5h1M52 195.5h1M70 195.5h1M78 195.5h1M87 195.5h1M89 195.5h1M95 195.5h1M109 195.5h1M146 195.5h1M149 195.5h1M156 195.5h2M161 195.5h1M180 195.5h1M194 195.5h1M199 195.5h1M206 195.5h1M220 195.5h2M223 195.5h1M233 195.5h1M13 196.5h1M18 196.5h1M25 196.5h1M29 196.5h1M37 196.5h2M40 196.5h1M55 196.5h1M75 196.5h1M85 196.5h1M96 196.5h1M102 196.5h1M119 196.5h1M141 196.5h1M155 196.5h1M159 196.5h1M162 196.5h1M164 196.5h1M168 196.5h1M184 196.5h1M216 196.5h1M219 196.5h1M232 196.5h1M237 196.5h1M241 196.5h1M244 196.5h1M246 196.5h1M248 196.5h1M250 196.5h1M257 196.5h1M15 197.5h1M20 197.5h2M24 197.5h1M52 197.5h1M73 197.5h4M84 197.5h1M91 197.5h1M97 197.5h1M109 197.5h1M114 197.5h1M119 197.5h1M127 197.5h1M135 197.5h1M147 197.5h1M150 197.5h1M156 197.5h1M159 197.5h1M167 197.5h1M171 197.5h1M201 197.5h1M214 197.5h1M221 197.5h1M225 197.5h1M229 197.5h1M234 197.5h1M250 197.5h1M256 197.5h1M258 197.5h1M6 198.5h1M13 198.5h1M57 198.5h1M74 198.5h1M92 198.5h1M95 198.5h1M99 198.5h1M112 198.5h2M127 198.5h1M130 198.5h1M134 198.5h1M147 198.5h1M169 198.5h1M172 198.5h1M178 198.5h1M183 198.5h1M224 198.5h1M245 198.5h1M258 198.5h1M8 199.5h1M18 199.5h1M33 199.5h1M61 199.5h1M71 199.5h1M76 199.5h1M78 199.5h1M88 199.5h1M95 199.5h2M100 199.5h1M103 199.5h1M109 199.5h1M123 199.5h1M142 199.5h1M145 199.5h1M162 199.5h1M167 199.5h1M191 199.5h1M193 199.5h1M230 199.5h1M243 199.5h1M247 199.5h1M252 199.5h1M256 199.5h1M11 200.5h1M28 200.5h2M47 200.5h1M54 200.5h1M56 200.5h1M70 200.5h1M74 200.5h1M90 200.5h1M102 200.5h1M119 200.5h1M133 200.5h1M179 200.5h1M184 200.5h1M188 200.5h1M195 200.5h1M217 200.5h1M239 200.5h1M255 200.5h1M6 201.5h2M16 201.5h1M29 201.5h1M31 201.5h1M33 201.5h1M35 201.5h1M40 201.5h1M45 201.5h1M60 201.5h1M71 201.5h2M93 201.5h1M107 201.5h1M110 201.5h1M115 201.5h1M122 201.5h2M125 201.5h1M127 201.5h1M133 201.5h1M135 201.5h1M149 201.5h1M157 201.5h1M205 201.5h2M228 201.5h1M233 201.5h1M241 201.5h1M7 202.5h1M10 202.5h1M27 202.5h1M41 202.5h1M43 202.5h1M53 202.5h1M55 202.5h1M78 202.5h1M88 202.5h1M92 202.5h1M97 202.5h1M104 202.5h1M109 202.5h2M125 202.5h1M148 202.5h1M150 202.5h2M168 202.5h1M190 202.5h1M214 202.5h1M230 202.5h1M246 202.5h1M8 203.5h1M27 203.5h1M31 203.5h1M33 203.5h1M38 203.5h2M52 203.5h1M62 203.5h2M68 203.5h1M76 203.5h1M86 203.5h1M89 203.5h1M100 203.5h1M117 203.5h1M125 203.5h1M142 203.5h1M151 203.5h1M159 203.5h1M174 203.5h1M194 203.5h1M197 203.5h1M204 203.5h1M206 203.5h1M211 203.5h1M217 203.5h1M221 203.5h1M224 203.5h1M235 203.5h1M8 204.5h1M17 204.5h2M20 204.5h1M30 204.5h1M36 204.5h1M68 204.5h1M79 204.5h1M83 204.5h1M95 204.5h1M102 204.5h1M121 204.5h1M142 204.5h1M151 204.5h1M160 204.5h1M162 204.5h1M164 204.5h1M170 204.5h1M182 204.5h1M186 204.5h1M200 204.5h1M203 204.5h1M232 204.5h1M236 204.5h1M243 204.5h1M39 205.5h1M44 205.5h2M53 205.5h1M60 205.5h1M69 205.5h1M80 205.5h1M82 205.5h3M90 205.5h1M110 205.5h1M116 205.5h1M120 205.5h2M138 205.5h1M155 205.5h2M169 205.5h1M175 205.5h1M185 205.5h1M197 205.5h1M209 205.5h1M214 205.5h2M219 205.5h2M223 205.5h1M225 205.5h1M236 205.5h1M238 205.5h1M244 205.5h1M247 205.5h1M25 206.5h1M30 206.5h1M54 206.5h2M75 206.5h1M83 206.5h1M89 206.5h1M96 206.5h1M126 206.5h1M163 206.5h1M173 206.5h1M176 206.5h1M179 206.5h1M183 206.5h1M193 206.5h1M195 206.5h1M209 206.5h1M215 206.5h1M217 206.5h1M219 206.5h1M221 206.5h1M226 206.5h1M228 206.5h1M234 206.5h1M240 206.5h1M247 206.5h2M252 206.5h1M260 206.5h2M8 207.5h1M27 207.5h1M41 207.5h1M43 207.5h1M45 207.5h1M48 207.5h1M52 207.5h1M55 207.5h1M80 207.5h1M85 207.5h1M88 207.5h1M98 207.5h1M101 207.5h1M105 207.5h1M131 207.5h1M137 207.5h2M151 207.5h2M156 207.5h1M165 207.5h2M201 207.5h1M205 207.5h2M213 207.5h1M220 207.5h1M224 207.5h1M229 207.5h1M237 207.5h1M247 207.5h1M261 207.5h1M21 208.5h1M27 208.5h1M37 208.5h1M54 208.5h1M62 208.5h1M69 208.5h1M81 208.5h1M96 208.5h2M112 208.5h1M130 208.5h1M134 208.5h1M138 208.5h1M154 208.5h1M156 208.5h1M166 208.5h1M169 208.5h1M181 208.5h1M183 208.5h1M198 208.5h1M210 208.5h1M212 208.5h1M234 208.5h1M255 208.5h1M261 208.5h1M11 209.5h1M14 209.5h1M20 209.5h1M29 209.5h1M32 209.5h1M44 209.5h1M47 209.5h1M53 209.5h1M60 209.5h2M90 209.5h1M95 209.5h1M112 209.5h1M116 209.5h1M119 209.5h1M125 209.5h1M128 209.5h1M144 209.5h1M147 209.5h1M194 209.5h1M203 209.5h1M208 209.5h1M218 209.5h1M223 209.5h1M225 209.5h1M243 209.5h1M250 209.5h2M255 209.5h1M261 209.5h1M12 210.5h1M17 210.5h1M19 210.5h1M24 210.5h1M34 210.5h1M42 210.5h1M56 210.5h1M59 210.5h1M87 210.5h1M93 210.5h1M96 210.5h1M99 210.5h1M105 210.5h1M109 210.5h2M113 210.5h1M116 210.5h1M128 210.5h1M132 210.5h1M134 210.5h1M142 210.5h1M144 210.5h1M162 210.5h1M165 210.5h1M175 210.5h1M178 210.5h1M184 210.5h1M187 210.5h2M190 210.5h1M197 210.5h2M235 210.5h1M244 210.5h1M248 210.5h1M251 210.5h1M258 210.5h1M260 210.5h1M32 211.5h1M53 211.5h1M57 211.5h1M74 211.5h1M91 211.5h1M93 211.5h1M118 211.5h1M125 211.5h1M137 211.5h1M146 211.5h1M148 211.5h1M150 211.5h1M155 211.5h1M173 211.5h1M175 211.5h1M177 211.5h1M183 211.5h1M194 211.5h1M207 211.5h1M214 211.5h1M216 211.5h1M224 211.5h1M228 211.5h1M233 211.5h1M238 211.5h1M250 211.5h1M20 212.5h1M23 212.5h1M27 212.5h1M44 212.5h1M59 212.5h1M63 212.5h1M66 212.5h1M86 212.5h1M93 212.5h1M114 212.5h1M118 212.5h1M122 212.5h1M126 212.5h1M154 212.5h1M157 212.5h1M163 212.5h1M166 212.5h1M184 212.5h3M188 212.5h1M193 212.5h1M206 212.5h1M219 212.5h1M222 212.5h1M232 212.5h1M240 212.5h1M247 212.5h1M10 213.5h1M24 213.5h1M30 213.5h1M37 213.5h1M39 213.5h1M56 213.5h2M70 213.5h1M92 213.5h1M113 213.5h1M118 213.5h1M131 213.5h1M146 213.5h1M154 213.5h1M156 213.5h1M168 213.5h1M171 213.5h1M173 213.5h1M181 213.5h1M193 213.5h1M202 213.5h1M214 213.5h1M221 213.5h2M229 213.5h1M235 213.5h1M249 213.5h1M257 213.5h1M39 214.5h1M41 214.5h1M60 214.5h1M72 214.5h1M97 214.5h1M99 214.5h1M102 214.5h1M104 214.5h1M119 214.5h1M127 214.5h1M137 214.5h1M152 214.5h1M166 214.5h1M170 214.5h1M189 214.5h1M198 214.5h1M209 214.5h1M215 214.5h1M228 214.5h2M237 214.5h1M250 214.5h1M259 214.5h1M12 215.5h2M34 215.5h1M46 215.5h1M50 215.5h1M58 215.5h1M81 215.5h2M87 215.5h1M90 215.5h1M106 215.5h1M112 215.5h1M118 215.5h1M124 215.5h1M143 215.5h1M147 215.5h1M152 215.5h1M156 215.5h1M166 215.5h1M171 215.5h1M177 215.5h1M179 215.5h1M186 215.5h1M190 215.5h1M199 215.5h1M209 215.5h1M211 215.5h2M228 215.5h1M237 215.5h2M258 215.5h1M13 216.5h2M16 216.5h1M32 216.5h1M34 216.5h1M37 216.5h1M46 216.5h1M61 216.5h1M65 216.5h1M68 216.5h1M80 216.5h1M89 216.5h1M100 216.5h1M122 216.5h1M124 216.5h1M133 216.5h1M136 216.5h2M154 216.5h1M159 216.5h1M171 216.5h1M175 216.5h3M188 216.5h1M190 216.5h3M202 216.5h1M221 216.5h1M233 216.5h1M255 216.5h1M7 217.5h1M14 217.5h2M19 217.5h2M33 217.5h1M38 217.5h1M42 217.5h1M44 217.5h1M47 217.5h1M61 217.5h1M65 217.5h2M69 217.5h1M95 217.5h1M105 217.5h1M120 217.5h1M130 217.5h1M132 217.5h2M143 217.5h1M149 217.5h1M154 217.5h1M163 217.5h1M165 217.5h1M167 217.5h1M181 217.5h1M186 217.5h1M191 217.5h1M198 217.5h1M246 217.5h3M257 217.5h2M8 218.5h1M24 218.5h1M38 218.5h1M40 218.5h1M47 218.5h1M56 218.5h1M68 218.5h1M89 218.5h1M91 218.5h1M109 218.5h1M112 218.5h1M116 218.5h1M159 218.5h1M169 218.5h1M174 218.5h1M179 218.5h1M185 218.5h1M192 218.5h1M203 218.5h1M220 218.5h1M228 218.5h1M241 218.5h1M260 218.5h1M39 219.5h1M47 219.5h1M71 219.5h1M82 219.5h1M84 219.5h1M89 219.5h1M96 219.5h1M101 219.5h1M129 219.5h1M137 219.5h1M141 219.5h1M162 219.5h1M171 219.5h1M178 219.5h1M195 219.5h1M197 219.5h1M204 219.5h2M207 219.5h1M219 219.5h2M227 219.5h1M231 219.5h1M236 219.5h1M241 219.5h1M246 219.5h1M13 220.5h2M21 220.5h1M26 220.5h1M36 220.5h1M46 220.5h1M50 220.5h1M59 220.5h1M63 220.5h1M69 220.5h1M106 220.5h1M115 220.5h1M124 220.5h1M135 220.5h2M138 220.5h1M143 220.5h2M166 220.5h1M170 220.5h2M173 220.5h1M177 220.5h1M181 220.5h1M194 220.5h1M198 220.5h1M201 220.5h1M213 220.5h1M219 220.5h1M236 220.5h1M240 220.5h1M252 220.5h1M255 220.5h1M19 221.5h1M21 221.5h1M34 221.5h1M54 221.5h1M59 221.5h1M74 221.5h2M89 221.5h1M103 221.5h1M105 221.5h1M107 221.5h1M113 221.5h1M135 221.5h1M146 221.5h1M152 221.5h1M166 221.5h1M169 221.5h1M172 221.5h1M181 221.5h1M199 221.5h1M207 221.5h1M234 221.5h2M248 221.5h1M252 221.5h1M36 222.5h1M54 222.5h1M58 222.5h1M66 222.5h1M74 222.5h1M87 222.5h1M101 222.5h1M111 222.5h2M114 222.5h1M125 222.5h1M129 222.5h1M138 222.5h1M151 222.5h1M156 222.5h1M180 222.5h1M184 222.5h1M188 222.5h1M198 222.5h2M201 222.5h1M209 222.5h2M212 222.5h1M221 222.5h1M225 222.5h1M232 222.5h2M12 223.5h1M14 223.5h1M25 223.5h1M30 223.5h1M33 223.5h1M51 223.5h2M55 223.5h2M60 223.5h1M67 223.5h2M76 223.5h1M89 223.5h1M93 223.5h1M100 223.5h1M110 223.5h1M115 223.5h1M117 223.5h1M126 223.5h1M136 223.5h2M144 223.5h1M155 223.5h1M159 223.5h1M161 223.5h3M166 223.5h1M168 223.5h1M171 223.5h1M176 223.5h1M178 223.5h1M199 223.5h1M212 223.5h2M228 223.5h1M56 224.5h2M71 224.5h1M78 224.5h1M83 224.5h4M88 224.5h1M97 224.5h1M100 224.5h1M105 224.5h1M119 224.5h1M149 224.5h1M185 224.5h1M202 224.5h1M216 224.5h1M16 225.5h1M25 225.5h1M31 225.5h1M36 225.5h2M46 225.5h1M62 225.5h1M78 225.5h1M81 225.5h2M98 225.5h1M101 225.5h1M113 225.5h3M117 225.5h2M128 225.5h2M136 225.5h1M157 225.5h1M166 225.5h1M181 225.5h1M187 225.5h1M196 225.5h1M198 225.5h1M205 225.5h1M217 225.5h1M220 225.5h1M224 225.5h1M227 225.5h1M243 225.5h1M250 225.5h1M260 225.5h1M12 226.5h1M26 226.5h1M35 226.5h1M39 226.5h1M44 226.5h1M60 226.5h1M68 226.5h1M76 226.5h1M98 226.5h1M100 226.5h2M108 226.5h1M113 226.5h1M133 226.5h1M150 226.5h1M156 226.5h2M166 226.5h1M169 226.5h1M173 226.5h1M187 226.5h2M191 226.5h1M195 226.5h1M217 226.5h1M221 226.5h1M235 226.5h1M238 226.5h1M242 226.5h1M249 226.5h1M256 226.5h1M17 227.5h1M33 227.5h1M57 227.5h1M64 227.5h2M67 227.5h1M111 227.5h1M116 227.5h1M120 227.5h1M122 227.5h1M126 227.5h1M144 227.5h1M155 227.5h1M177 227.5h1M183 227.5h1M210 227.5h1M218 227.5h1M227 227.5h1M235 227.5h1M244 227.5h1M247 227.5h2M250 227.5h1M252 227.5h1M259 227.5h1M32 228.5h1M51 228.5h1M53 228.5h1M68 228.5h2M79 228.5h2M91 228.5h1M98 228.5h1M104 228.5h1M115 228.5h1M164 228.5h1M169 228.5h1M178 228.5h1M184 228.5h1M197 228.5h1M202 228.5h1M206 228.5h1M228 228.5h1M235 228.5h1M258 228.5h1M7 229.5h1M12 229.5h2M22 229.5h1M27 229.5h1M30 229.5h1M33 229.5h1M37 229.5h1M52 229.5h1M61 229.5h1M65 229.5h1M75 229.5h1M84 229.5h1M89 229.5h1M92 229.5h1M94 229.5h1M102 229.5h1M115 229.5h1M125 229.5h1M139 229.5h1M148 229.5h1M172 229.5h1M217 229.5h1M222 229.5h1M224 229.5h1M237 229.5h1M244 229.5h1M246 229.5h1M250 229.5h1M261 229.5h1M6 230.5h1M14 230.5h1M29 230.5h1M31 230.5h1M52 230.5h1M59 230.5h1M67 230.5h1M83 230.5h1M92 230.5h1M111 230.5h1M165 230.5h1M167 230.5h1M186 230.5h1M188 230.5h1M195 230.5h1M221 230.5h1M230 230.5h2M234 230.5h1M237 230.5h1M243 230.5h1M261 230.5h1M6 231.5h1M8 231.5h1M21 231.5h1M43 231.5h1M52 231.5h1M73 231.5h1M76 231.5h1M87 231.5h1M100 231.5h1M108 231.5h2M117 231.5h1M141 231.5h1M146 231.5h1M165 231.5h1M182 231.5h1M196 231.5h1M218 231.5h1M226 231.5h1M230 231.5h1M234 231.5h1M246 231.5h1M257 231.5h1M8 232.5h1M15 232.5h1M22 232.5h1M24 232.5h1M27 232.5h1M29 232.5h2M44 232.5h1M48 232.5h1M54 232.5h1M69 232.5h1M78 232.5h1M80 232.5h1M96 232.5h2M109 232.5h1M111 232.5h1M117 232.5h1M123 232.5h1M127 232.5h1M133 232.5h1M145 232.5h1M171 232.5h1M182 232.5h1M184 232.5h1M189 232.5h1M193 232.5h1M202 232.5h1M223 232.5h1M238 232.5h1M240 232.5h1M246 232.5h1M260 232.5h1M9 233.5h1M27 233.5h1M30 233.5h1M47 233.5h1M50 233.5h1M60 233.5h1M63 233.5h1M106 233.5h1M118 233.5h1M120 233.5h1M124 233.5h1M129 233.5h1M133 233.5h1M140 233.5h1M146 233.5h1M154 233.5h1M164 233.5h2M169 233.5h1M177 233.5h1M181 233.5h1M198 233.5h1M223 233.5h1M226 233.5h1M230 233.5h1M235 233.5h1M255 233.5h1M257 233.5h1M21 234.5h1M24 234.5h1M26 234.5h2M38 234.5h1M54 234.5h1M59 234.5h1M97 234.5h1M101 234.5h1M113 234.5h3M121 234.5h2M126 234.5h1M154 234.5h1M177 234.5h1M183 234.5h1M195 234.5h1M204 234.5h1M212 234.5h1M215 234.5h1M245 234.5h1M259 234.5h1M261 234.5h1M11 235.5h1M27 235.5h1M47 235.5h1M49 235.5h1M55 235.5h1M73 235.5h1M104 235.5h1M112 235.5h1M155 235.5h1M163 235.5h1M166 235.5h2M178 235.5h1M218 235.5h1M223 235.5h2M239 235.5h1M248 235.5h1M255 235.5h1M259 235.5h1M20 236.5h1M27 236.5h1M35 236.5h1M48 236.5h1M65 236.5h1M72 236.5h1M85 236.5h1M89 236.5h1M92 236.5h1M100 236.5h1M103 236.5h1M117 236.5h1M126 236.5h1M130 236.5h1M159 236.5h2M164 236.5h2M167 236.5h1M170 236.5h1M178 236.5h1M180 236.5h1M192 236.5h1M195 236.5h1M211 236.5h1M237 236.5h2M21 237.5h1M52 237.5h1M59 237.5h1M70 237.5h1M80 237.5h1M89 237.5h1M94 237.5h1M99 237.5h1M101 237.5h2M104 237.5h1M121 237.5h1M141 237.5h1M156 237.5h1M180 237.5h1M195 237.5h1M200 237.5h1M203 237.5h1M222 237.5h1M11 238.5h1M31 238.5h1M45 238.5h1M53 238.5h1M58 238.5h1M62 238.5h1M75 238.5h1M80 238.5h1M97 238.5h1M117 238.5h1M128 238.5h3M138 238.5h2M141 238.5h1M146 238.5h1M151 238.5h1M161 238.5h1M163 238.5h1M167 238.5h1M182 238.5h2M196 238.5h1M211 238.5h1M215 238.5h1M222 238.5h1M225 238.5h1M230 238.5h1M252 238.5h1M259 238.5h1M13 239.5h1M19 239.5h1M32 239.5h1M38 239.5h1M49 239.5h1M61 239.5h1M87 239.5h1M112 239.5h1M125 239.5h1M134 239.5h1M138 239.5h1M146 239.5h1M168 239.5h1M173 239.5h1M215 239.5h1M249 239.5h1M255 239.5h1M259 239.5h1M8 240.5h1M10 240.5h1M13 240.5h1M18 240.5h1M23 240.5h1M35 240.5h1M58 240.5h3M89 240.5h1M100 240.5h1M118 240.5h1M126 240.5h1M132 240.5h1M144 240.5h1M153 240.5h1M161 240.5h1M184 240.5h1M207 240.5h1M213 240.5h1M232 240.5h1M242 240.5h1M6 241.5h2M17 241.5h2M30 241.5h1M45 241.5h1M55 241.5h1M58 241.5h1M64 241.5h1M103 241.5h1M111 241.5h1M132 241.5h1M135 241.5h1M147 241.5h1M161 241.5h1M172 241.5h1M179 241.5h1M211 241.5h1M215 241.5h1M224 241.5h1M228 241.5h1M232 241.5h1M238 241.5h1M250 241.5h1M256 241.5h1M13 242.5h1M31 242.5h1M37 242.5h1M49 242.5h1M63 242.5h1M68 242.5h1M82 242.5h1M93 242.5h1M100 242.5h1M115 242.5h1M117 242.5h1M121 242.5h1M163 242.5h1M171 242.5h1M177 242.5h1M180 242.5h1M188 242.5h1M191 242.5h1M198 242.5h1M214 242.5h1M218 242.5h1M222 242.5h1M230 242.5h1M247 242.5h2M253 242.5h1M6 243.5h1M12 243.5h1M28 243.5h1M37 243.5h1M59 243.5h1M70 243.5h1M76 243.5h1M85 243.5h1M88 243.5h1M103 243.5h1M107 243.5h2M131 243.5h1M143 243.5h1M148 243.5h1M154 243.5h1M156 243.5h1M165 243.5h1M168 243.5h1M171 243.5h1M188 243.5h1M192 243.5h1M196 243.5h1M212 243.5h1M228 243.5h1M233 243.5h1M236 243.5h1M259 243.5h1M40 244.5h1M75 244.5h1M84 244.5h1M101 244.5h1M129 244.5h1M142 244.5h1M165 244.5h1M169 244.5h1M178 244.5h1M181 244.5h1M191 244.5h1M221 244.5h1M224 244.5h1M6 245.5h1M19 245.5h2M40 245.5h1M66 245.5h2M70 245.5h1M83 245.5h1M90 245.5h1M105 245.5h1M140 245.5h1M150 245.5h1M155 245.5h1M170 245.5h1M179 245.5h1M182 245.5h1M186 245.5h1M193 245.5h1M205 245.5h1M212 245.5h1M249 245.5h1M255 245.5h1M258 245.5h1M13 246.5h1M20 246.5h1M63 246.5h1M73 246.5h1M75 246.5h1M80 246.5h1M82 246.5h1M84 246.5h1M96 246.5h1M100 246.5h1M109 246.5h1M114 246.5h2M119 246.5h1M123 246.5h1M134 246.5h1M140 246.5h1M154 246.5h1M156 246.5h1M161 246.5h1M169 246.5h1M180 246.5h1M192 246.5h1M209 246.5h1M224 246.5h1M230 246.5h1M242 246.5h1M244 246.5h2M261 246.5h1M13 247.5h1M18 247.5h1M29 247.5h1M47 247.5h1M67 247.5h1M74 247.5h1M84 247.5h1M104 247.5h1M108 247.5h1M128 247.5h1M131 247.5h1M134 247.5h2M163 247.5h1M165 247.5h1M182 247.5h1M192 247.5h1M197 247.5h1M202 247.5h1M217 247.5h1M227 247.5h1M230 247.5h1M233 247.5h1M245 247.5h1M257 247.5h1M15 248.5h1M27 248.5h1M33 248.5h1M45 248.5h1M53 248.5h3M102 248.5h1M106 248.5h1M113 248.5h2M118 248.5h1M121 248.5h2M127 248.5h1M171 248.5h1M185 248.5h1M187 248.5h1M198 248.5h1M227 248.5h1M231 248.5h1M240 248.5h1M248 248.5h1M260 248.5h1M8 249.5h1M22 249.5h1M37 249.5h1M52 249.5h1M54 249.5h1M56 249.5h1M64 249.5h1M81 249.5h1M95 249.5h1M99 249.5h1M117 249.5h1M125 249.5h1M138 249.5h1M144 249.5h1M161 249.5h1M168 249.5h1M170 249.5h1M172 249.5h1M193 249.5h1M199 249.5h2M205 249.5h1M210 249.5h1M230 249.5h1M232 249.5h2M245 249.5h1M249 249.5h1M8 250.5h1M23 250.5h1M26 250.5h1M34 250.5h1M40 250.5h1M45 250.5h1M55 250.5h1M57 250.5h1M63 250.5h1M65 250.5h1M68 250.5h1M89 250.5h1M93 250.5h1M98 250.5h1M108 250.5h2M124 250.5h1M127 250.5h1M134 250.5h1M144 250.5h1M164 250.5h1M177 250.5h2M193 250.5h1M206 250.5h1M214 250.5h1M221 250.5h2M226 250.5h1M244 250.5h1M256 250.5h1M18 251.5h1M20 251.5h1M31 251.5h1M42 251.5h1M52 251.5h1M62 251.5h1M75 251.5h1M85 251.5h1M89 251.5h1M115 251.5h1M121 251.5h1M132 251.5h1M135 251.5h1M153 251.5h1M157 251.5h1M165 251.5h1M169 251.5h1M192 251.5h1M195 251.5h1M205 251.5h2M208 251.5h2M215 251.5h2M220 251.5h1M223 251.5h1M231 251.5h1M235 251.5h1M258 251.5h1M9 252.5h1M17 252.5h1M28 252.5h1M38 252.5h1M52 252.5h2M55 252.5h1M59 252.5h1M64 252.5h1M67 252.5h1M74 252.5h1M76 252.5h1M85 252.5h1M89 252.5h1M92 252.5h2M106 252.5h1M111 252.5h1M137 252.5h1M139 252.5h1M145 252.5h1M148 252.5h1M155 252.5h1M177 252.5h1M183 252.5h1M187 252.5h2M191 252.5h1M207 252.5h1M219 252.5h1M238 252.5h1M242 252.5h1M13 253.5h1M17 253.5h1M27 253.5h1M54 253.5h1M57 253.5h1M89 253.5h1M93 253.5h1M100 253.5h3M114 253.5h1M127 253.5h3M137 253.5h1M144 253.5h1M148 253.5h1M157 253.5h1M159 253.5h1M162 253.5h1M169 253.5h1M181 253.5h1M212 253.5h4M221 253.5h1M229 253.5h2M232 253.5h1M234 253.5h1M239 253.5h1M241 253.5h1M250 253.5h1M253 253.5h1M9 254.5h1M30 254.5h1M57 254.5h1M70 254.5h2M95 254.5h1M100 254.5h1M108 254.5h1M141 254.5h1M145 254.5h1M156 254.5h1M176 254.5h1M192 254.5h1M209 254.5h1M214 254.5h1M223 254.5h2M246 254.5h1M260 254.5h1M17 255.5h2M24 255.5h1M33 255.5h1M36 255.5h1M40 255.5h1M52 255.5h1M57 255.5h1M62 255.5h1M75 255.5h1M84 255.5h1M95 255.5h1M104 255.5h1M107 255.5h1M110 255.5h1M134 255.5h2M147 255.5h1M159 255.5h1M164 255.5h1M172 255.5h1M195 255.5h2M200 255.5h1M205 255.5h1M214 255.5h1M221 255.5h1M232 255.5h1M237 255.5h1M250 255.5h1M16 256.5h1M20 256.5h1M26 256.5h1M29 256.5h1M43 256.5h1M51 256.5h1M53 256.5h1M92 256.5h1M97 256.5h3M103 256.5h1M120 256.5h1M124 256.5h1M133 256.5h1M151 256.5h1M153 256.5h1M171 256.5h2M191 256.5h1M193 256.5h1M198 256.5h1M225 256.5h1M241 256.5h1M257 256.5h2M8 257.5h1M13 257.5h1M19 257.5h2M31 257.5h1M40 257.5h1M75 257.5h1M79 257.5h2M82 257.5h1M91 257.5h1M106 257.5h1M109 257.5h1M115 257.5h1M119 257.5h1M126 257.5h1M130 257.5h1M155 257.5h1M176 257.5h1M180 257.5h1M184 257.5h1M202 257.5h1M209 257.5h1M217 257.5h1M219 257.5h1M224 257.5h2M258 257.5h1M7 258.5h1M11 258.5h1M14 258.5h1M16 258.5h1M28 258.5h1M30 258.5h1M38 258.5h1M41 258.5h1M45 258.5h1M47 258.5h2M77 258.5h1M90 258.5h1M94 258.5h1M97 258.5h1M105 258.5h1M117 258.5h1M122 258.5h1M139 258.5h2M142 258.5h1M147 258.5h1M187 258.5h1M191 258.5h1M205 258.5h1M221 258.5h1M225 258.5h2M228 258.5h1M230 258.5h1M233 258.5h1M250 258.5h1M253 258.5h1M13 259.5h1M15 259.5h1M27 259.5h2M32 259.5h1M35 259.5h1M40 259.5h1M44 259.5h1M46 259.5h1M58 259.5h1M63 259.5h2M70 259.5h1M80 259.5h1M85 259.5h1M122 259.5h1M128 259.5h1M130 259.5h1M138 259.5h1M151 259.5h1M160 259.5h2M164 259.5h1M191 259.5h1M193 259.5h1M201 259.5h1M206 259.5h1M225 259.5h1M233 259.5h1M241 259.5h1M250 259.5h1M255 259.5h1M8 260.5h1M23 260.5h1M25 260.5h1M56 260.5h1M69 260.5h1M72 260.5h1M77 260.5h1M98 260.5h1M100 260.5h1M104 260.5h1M119 260.5h1M121 260.5h1M123 260.5h2M131 260.5h1M150 260.5h1M169 260.5h1M184 260.5h1M190 260.5h1M260 260.5h1M9 261.5h1M12 261.5h1M28 261.5h1M32 261.5h1M48 261.5h1M57 261.5h1M59 261.5h1M65 261.5h1M67 261.5h1M73 261.5h1M92 261.5h1M107 261.5h1M114 261.5h1M116 261.5h1M132 261.5h1M159 261.5h1M171 261.5h1M174 261.5h1M183 261.5h1M194 261.5h1M201 261.5h1M212 261.5h1M218 261.5h1M239 261.5h1M252 261.5h2M258 261.5h1M261 261.5h1" stroke="#0000a0" stroke-width="1" fill="none"/></svg></div>
<!-- loops input -->
<div class="sunk" style="left:74px;top:372px;width:46px;height:21px"><i></i></div>
<!-- button -->
<div class="abs" style="left:134px;top:372px;width:191px;height:21px;box-sizing:border-box;border:1px solid #000;background:#c8c8a8">
 <div style="box-sizing:border-box;width:189px;height:19px;border:1px solid;border-color:#ecebd6 #000 #000 #ecebd6">
  <div style="box-sizing:border-box;width:187px;height:17px;border:1px solid;border-color:#c8c8a8 #8c8a54 #8c8a54 #c8c8a8"></div></div>
 <div class="abs" style="left:3px;top:3px;width:183px;height:13px;box-sizing:border-box;border:1px dotted #000"></div>
</div>
<!-- progress -->
<div class="abs" style="left:34px;top:407px;width:326px;height:13px;box-sizing:border-box;border:1px solid;border-color:#8c8a54 #ecebd6 #ecebd6 #8c8a54;background:#d8d8c0">
 <div class="abs" style="left:1px;top:1px;width:321px;height:9px;background:repeating-linear-gradient(90deg,#804040 0,#804040 6px,transparent 6px,transparent 8px)"></div>
</div>
<!-- empty box -->
<div class="sunk" style="left:309px;top:467px;width:316px;height:21px"><i></i></div>
<!-- text box -->
<div class="sunk" style="left:34px;top:497px;width:596px;height:51px"><i></i>
 <div class="mono" style="left:1px;top:5px">Black RNG Algorithm, see  -   www.RomanBlack.com/Black_RNG.htm
Cache = 1000000 bytes,  Cylinders = 17 + 1
Cylinder starting values = 1,2,3,1,2,3,4,5,7,1,2,3,6,4,1,3,11 + 9</div>
 <!-- scrollbar -->
 <div class="abs" style="left:580px;top:1px;width:13px;height:47px;background:#e6e3cf"></div>
 <div class="abs sb" style="left:580px;top:1px;width:13px;height:13px;background:#c8c8a8;box-sizing:border-box;border:1px solid;border-color:#ecebd6 #000 #000 #ecebd6"><div style="width:11px;height:11px;box-sizing:border-box;border:1px solid;border-color:#c8c8a8 #8c8a54 #8c8a54 #c8c8a8"></div>
  <svg class="abs" style="left:3px;top:4px" width="5" height="3" viewBox="0 0 5 3" shape-rendering="crispEdges"><path d="M2 0h1v1h1v1h1v1h-5v-1h1v-1h1z" fill="#000"/></svg></div>
 <div class="abs sb" style="left:580px;top:14px;width:13px;height:15px;background:#c8c8a8;box-sizing:border-box;border:1px solid;border-color:#ecebd6 #000 #000 #ecebd6"><div style="width:11px;height:13px;box-sizing:border-box;border:1px solid;border-color:#c8c8a8 #8c8a54 #8c8a54 #c8c8a8"></div></div>
 <div class="abs sb" style="left:580px;top:35px;width:13px;height:13px;background:#c8c8a8;box-sizing:border-box;border:1px solid;border-color:#ecebd6 #000 #000 #ecebd6"><div style="width:11px;height:11px;box-sizing:border-box;border:1px solid;border-color:#c8c8a8 #8c8a54 #8c8a54 #c8c8a8"></div>
  <svg class="abs" style="left:3px;top:4px" width="5" height="3" viewBox="0 0 5 3" shape-rendering="crispEdges"><path d="M0 0h5v1h-1v1h-1v1h-1v-1h-1v-1h-1z" fill="#000"/></svg></div>
</div>
<!-- groups -->
<div class="abs" style="left:379px;top:387px;width:155px;height:65px;box-sizing:border-box;border:1px solid #8c8a54"></div>
<div class="abs" style="left:380px;top:388px;width:155px;height:65px;box-sizing:border-box;border:1px solid #ecebd6;border-right-color:#ecebd6;clip-path:polygon(0 0,100% 0,100% 100%,0 100%,0 0,1px 1px,1px calc(100% - 2px),calc(100% - 2px) calc(100% - 2px),calc(100% - 2px) 1px,1px 1px)"></div>
<div class="abs" style="left:669px;top:387px;width:240px;height:65px;box-sizing:border-box;border:1px solid #8c8a54"></div>
<div class="abs" style="left:670px;top:388px;width:240px;height:65px;box-sizing:border-box;border:1px solid #ecebd6;border-right-color:#ecebd6;clip-path:polygon(0 0,100% 0,100% 100%,0 100%,0 0,1px 1px,1px calc(100% - 2px),calc(100% - 2px) calc(100% - 2px),calc(100% - 2px) 1px,1px 1px)"></div>
<div class="abs" style="left:669px;top:457px;width:240px;height:55px;box-sizing:border-box;border:1px solid #8c8a54"></div>
<div class="abs" style="left:670px;top:458px;width:240px;height:55px;box-sizing:border-box;border:1px solid #ecebd6;border-right-color:#ecebd6;clip-path:polygon(0 0,100% 0,100% 100%,0 100%,0 0,1px 1px,1px calc(100% - 2px),calc(100% - 2px) calc(100% - 2px),calc(100% - 2px) 1px,1px 1px)"></div>
<svg class="abs" style="left:385px;top:394px" width="12" height="12" viewBox="0 0 12 12" shape-rendering="crispEdges">
<path d="M4 0h4v1h2v1h-2v-1h-4v1h-2v2h-1v4h-1v-4h1v-2h1v-1h2z M1 8h1v1h-1z" fill="#8c8a54"/>
<path d="M4 1h4v1h2v1h-2v-1h-4v1h-1v1h-1v4h-1v-4h1v-2h2z M2 8h1v1h-1z" fill="#000"/>
<path d="M4 2h4v1h1v1h1v4h-1v1h-1v1h-4v-1h-1v-1h-1v-4h1v-1h1z" fill="#d8d8c0"/>
<path d="M10 2h1v2h1v4h-1v2h-1v1h-2v1h-4v-1h-2v-1h2v1h4v-1h2v-2h1v-4h-1z" fill="#ecebd6"/>
<path d="M9 3h1v1h1v4h-1v1h-1v1h-1v1h-4v-1h-2v-1h2v1h4v-1h1v-1h1v-4h-1z" fill="#c8c8a8" style="display:none"/>
<path d="M5 4h2v1h1v2h-1v1h-2v-1h-1v-2h1z" fill="#000"/></svg><svg class="abs" style="left:385px;top:414px" width="12" height="12" viewBox="0 0 12 12" shape-rendering="crispEdges">
<path d="M4 0h4v1h2v1h-2v-1h-4v1h-2v2h-1v4h-1v-4h1v-2h1v-1h2z M1 8h1v1h-1z" fill="#8c8a54"/>
<path d="M4 1h4v1h2v1h-2v-1h-4v1h-1v1h-1v4h-1v-4h1v-2h2z M2 8h1v1h-1z" fill="#000"/>
<path d="M4 2h4v1h1v1h1v4h-1v1h-1v1h-4v-1h-1v-1h-1v-4h1v-1h1z" fill="#d8d8c0"/>
<path d="M10 2h1v2h1v4h-1v2h-1v1h-2v1h-4v-1h-2v-1h2v1h4v-1h2v-2h1v-4h-1z" fill="#ecebd6"/>
<path d="M9 3h1v1h1v4h-1v1h-1v1h-1v1h-4v-1h-2v-1h2v1h4v-1h1v-1h1v-4h-1z" fill="#c8c8a8" style="display:none"/>
</svg><svg class="abs" style="left:385px;top:434px" width="12" height="12" viewBox="0 0 12 12" shape-rendering="crispEdges">
<path d="M4 0h4v1h2v1h-2v-1h-4v1h-2v2h-1v4h-1v-4h1v-2h1v-1h2z M1 8h1v1h-1z" fill="#8c8a54"/>
<path d="M4 1h4v1h2v1h-2v-1h-4v1h-1v1h-1v4h-1v-4h1v-2h2z M2 8h1v1h-1z" fill="#000"/>
<path d="M4 2h4v1h1v1h1v4h-1v1h-1v1h-4v-1h-1v-1h-1v-4h1v-1h1z" fill="#d8d8c0"/>
<path d="M10 2h1v2h1v4h-1v2h-1v1h-2v1h-4v-1h-2v-1h2v1h4v-1h2v-2h1v-4h-1z" fill="#ecebd6"/>
<path d="M9 3h1v1h1v4h-1v1h-1v1h-1v1h-4v-1h-2v-1h2v1h4v-1h1v-1h1v-4h-1z" fill="#c8c8a8" style="display:none"/>
</svg>
<svg class="abs" style="left:675px;top:394px" width="12" height="12" viewBox="0 0 12 12" shape-rendering="crispEdges">
<path d="M4 0h4v1h2v1h-2v-1h-4v1h-2v2h-1v4h-1v-4h1v-2h1v-1h2z M1 8h1v1h-1z" fill="#8c8a54"/>
<path d="M4 1h4v1h2v1h-2v-1h-4v1h-1v1h-1v4h-1v-4h1v-2h2z M2 8h1v1h-1z" fill="#000"/>
<path d="M4 2h4v1h1v1h1v4h-1v1h-1v1h-4v-1h-1v-1h-1v-4h1v-1h1z" fill="#d8d8c0"/>
<path d="M10 2h1v2h1v4h-1v2h-1v1h-2v1h-4v-1h-2v-1h2v1h4v-1h2v-2h1v-4h-1z" fill="#ecebd6"/>
<path d="M9 3h1v1h1v4h-1v1h-1v1h-1v1h-4v-1h-2v-1h2v1h4v-1h1v-1h1v-4h-1z" fill="#c8c8a8" style="display:none"/>
<path d="M5 4h2v1h1v2h-1v1h-2v-1h-1v-2h1z" fill="#000"/></svg><svg class="abs" style="left:675px;top:414px" width="12" height="12" viewBox="0 0 12 12" shape-rendering="crispEdges">
<path d="M4 0h4v1h2v1h-2v-1h-4v1h-2v2h-1v4h-1v-4h1v-2h1v-1h2z M1 8h1v1h-1z" fill="#8c8a54"/>
<path d="M4 1h4v1h2v1h-2v-1h-4v1h-1v1h-1v4h-1v-4h1v-2h2z M2 8h1v1h-1z" fill="#000"/>
<path d="M4 2h4v1h1v1h1v4h-1v1h-1v1h-4v-1h-1v-1h-1v-4h1v-1h1z" fill="#d8d8c0"/>
<path d="M10 2h1v2h1v4h-1v2h-1v1h-2v1h-4v-1h-2v-1h2v1h4v-1h2v-2h1v-4h-1z" fill="#ecebd6"/>
<path d="M9 3h1v1h1v4h-1v1h-1v1h-1v1h-4v-1h-2v-1h2v1h4v-1h1v-1h1v-4h-1z" fill="#c8c8a8" style="display:none"/>
</svg><svg class="abs" style="left:675px;top:434px" width="12" height="12" viewBox="0 0 12 12" shape-rendering="crispEdges">
<path d="M4 0h4v1h2v1h-2v-1h-4v1h-2v2h-1v4h-1v-4h1v-2h1v-1h2z M1 8h1v1h-1z" fill="#8c8a54"/>
<path d="M4 1h4v1h2v1h-2v-1h-4v1h-1v1h-1v4h-1v-4h1v-2h2z M2 8h1v1h-1z" fill="#000"/>
<path d="M4 2h4v1h1v1h1v4h-1v1h-1v1h-4v-1h-1v-1h-1v-4h1v-1h1z" fill="#d8d8c0"/>
<path d="M10 2h1v2h1v4h-1v2h-1v1h-2v1h-4v-1h-2v-1h2v1h4v-1h2v-2h1v-4h-1z" fill="#ecebd6"/>
<path d="M9 3h1v1h1v4h-1v1h-1v1h-1v1h-4v-1h-2v-1h2v1h4v-1h1v-1h1v-4h-1z" fill="#c8c8a8" style="display:none"/>
</svg>
<svg class="abs" style="left:680px;top:469px" width="12" height="12" viewBox="0 0 12 12" shape-rendering="crispEdges">
<path d="M4 0h4v1h2v1h-2v-1h-4v1h-2v2h-1v4h-1v-4h1v-2h1v-1h2z M1 8h1v1h-1z" fill="#8c8a54"/>
<path d="M4 1h4v1h2v1h-2v-1h-4v1h-1v1h-1v4h-1v-4h1v-2h2z M2 8h1v1h-1z" fill="#000"/>
<path d="M4 2h4v1h1v1h1v4h-1v1h-1v1h-4v-1h-1v-1h-1v-4h1v-1h1z" fill="#d8d8c0"/>
<path d="M10 2h1v2h1v4h-1v2h-1v1h-2v1h-4v-1h-2v-1h2v1h4v-1h2v-2h1v-4h-1z" fill="#ecebd6"/>
<path d="M9 3h1v1h1v4h-1v1h-1v1h-1v1h-4v-1h-2v-1h2v1h4v-1h1v-1h1v-4h-1z" fill="#c8c8a8" style="display:none"/>
<path d="M5 4h2v1h1v2h-1v1h-2v-1h-1v-2h1z" fill="#000"/></svg><svg class="abs" style="left:680px;top:489px" width="12" height="12" viewBox="0 0 12 12" shape-rendering="crispEdges">
<path d="M4 0h4v1h2v1h-2v-1h-4v1h-2v2h-1v4h-1v-4h1v-2h1v-1h2z M1 8h1v1h-1z" fill="#8c8a54"/>
<path d="M4 1h4v1h2v1h-2v-1h-4v1h-1v1h-1v4h-1v-4h1v-2h2z M2 8h1v1h-1z" fill="#000"/>
<path d="M4 2h4v1h1v1h1v4h-1v1h-1v1h-4v-1h-1v-1h-1v-4h1v-1h1z" fill="#d8d8c0"/>
<path d="M10 2h1v2h1v4h-1v2h-1v1h-2v1h-4v-1h-2v-1h2v1h4v-1h2v-2h1v-4h-1z" fill="#ecebd6"/>
<path d="M9 3h1v1h1v4h-1v1h-1v1h-1v1h-4v-1h-2v-1h2v1h4v-1h1v-1h1v-4h-1z" fill="#c8c8a8" style="display:none"/>
</svg>
<span id="t_ti1" class="t" style="left:29px;top:6px;transform:scaleX(0.9673);color:#fff;font-weight:bold;">Black RNG</span>
<span id="t_ti2" class="t" style="left:94px;top:6px;transform:scaleX(1.0274);color:#fff;font-weight:bold;">v1.0</span>
<span id="t_ti3" class="t" style="left:123.5px;top:6px;transform:scaleX(1.0000);color:#fff;font-weight:bold;">-</span>
<span id="t_ti4" class="t" style="left:134px;top:6px;transform:scaleX(1.0107);color:#fff;font-weight:bold;">www.RomanBlack.com</span>
<span id="t_file" class="t" style="left:10px;top:25px;transform:scaleX(0.8271);">File</span>
<span id="t_help" class="t" style="left:38px;top:25px;transform:scaleX(0.9033);">Help</span>
<span id="t_l1" class="t" style="left:74px;top:347px;transform:scaleX(0.8843);">Spectral Distribution 8 bit (seed)</span>
<span id="t_l2" class="t" style="left:379px;top:347px;transform:scaleX(0.8860);">Spectral Distribution (final cache)</span>
<span id="t_l3" class="t" style="left:674px;top:347px;transform:scaleX(0.8944);">XY Scattergraph (final cache)</span>
<span id="t_s2a" class="t" style="left:379px;top:367px;transform:scaleX(0.8795);">Samples;</span>
<span id="t_s2b" class="t" style="left:435px;top:367px;transform:scaleX(0.8990);">1000000</span>
<span id="t_s3a" class="t" style="left:674px;top:367px;transform:scaleX(0.8795);">Samples;</span>
<span id="t_s3b" class="t" style="left:730px;top:367px;transform:scaleX(0.8988);">7500</span>
<span id="t_loops" class="t" style="left:34px;top:377px;transform:scaleX(0.8881);">Loops:</span>
<span id="t_10" class="t" style="left:78px;top:375px;transform:scaleX(0.8982);">10</span>
<span id="t_btn" class="t" style="left:176px;top:376px;transform:scaleX(0.8833);">Generate Entropy Data</span>
<span id="t_scr" class="t" style="left:34px;top:432px;transform:scaleX(0.8770);">Scramble complete!</span>
<span id="t_eng" class="t" style="left:34px;top:452px;transform:scaleX(0.8937);">Loops: 10&nbsp; Engine shuffles: 84325</span>
<span id="t_big" class="t" style="left:34px;top:472px;transform:scaleX(0.8831);">Spectral Biggest = 4066, Smallest = 3743</span>
<span id="t_r21" class="t" style="left:403px;top:393px;transform:scaleX(0.8815);">8 bit</span>
<span id="t_r22" class="t" style="left:403px;top:413px;transform:scaleX(0.8856);">16 bit</span>
<span id="t_r23" class="t" style="left:403px;top:433px;transform:scaleX(0.8856);">32 bit</span>
<span id="t_r31" class="t" style="left:693px;top:393px;transform:scaleX(0.8815);">8 bit</span>
<span id="t_r32" class="t" style="left:693px;top:413px;transform:scaleX(0.8856);">16 bit</span>
<span id="t_r33" class="t" style="left:693px;top:433px;transform:scaleX(0.8856);">32 bit</span>
<span id="t_u1" class="t" style="left:697px;top:468px;transform:scaleX(0.8783);">Use first 7500 XY samples</span>
<span id="t_u2" class="t" style="left:697px;top:488px;transform:scaleX(0.8914);">Use 7500 evenly spaced XY samples</span>
</body></html>
